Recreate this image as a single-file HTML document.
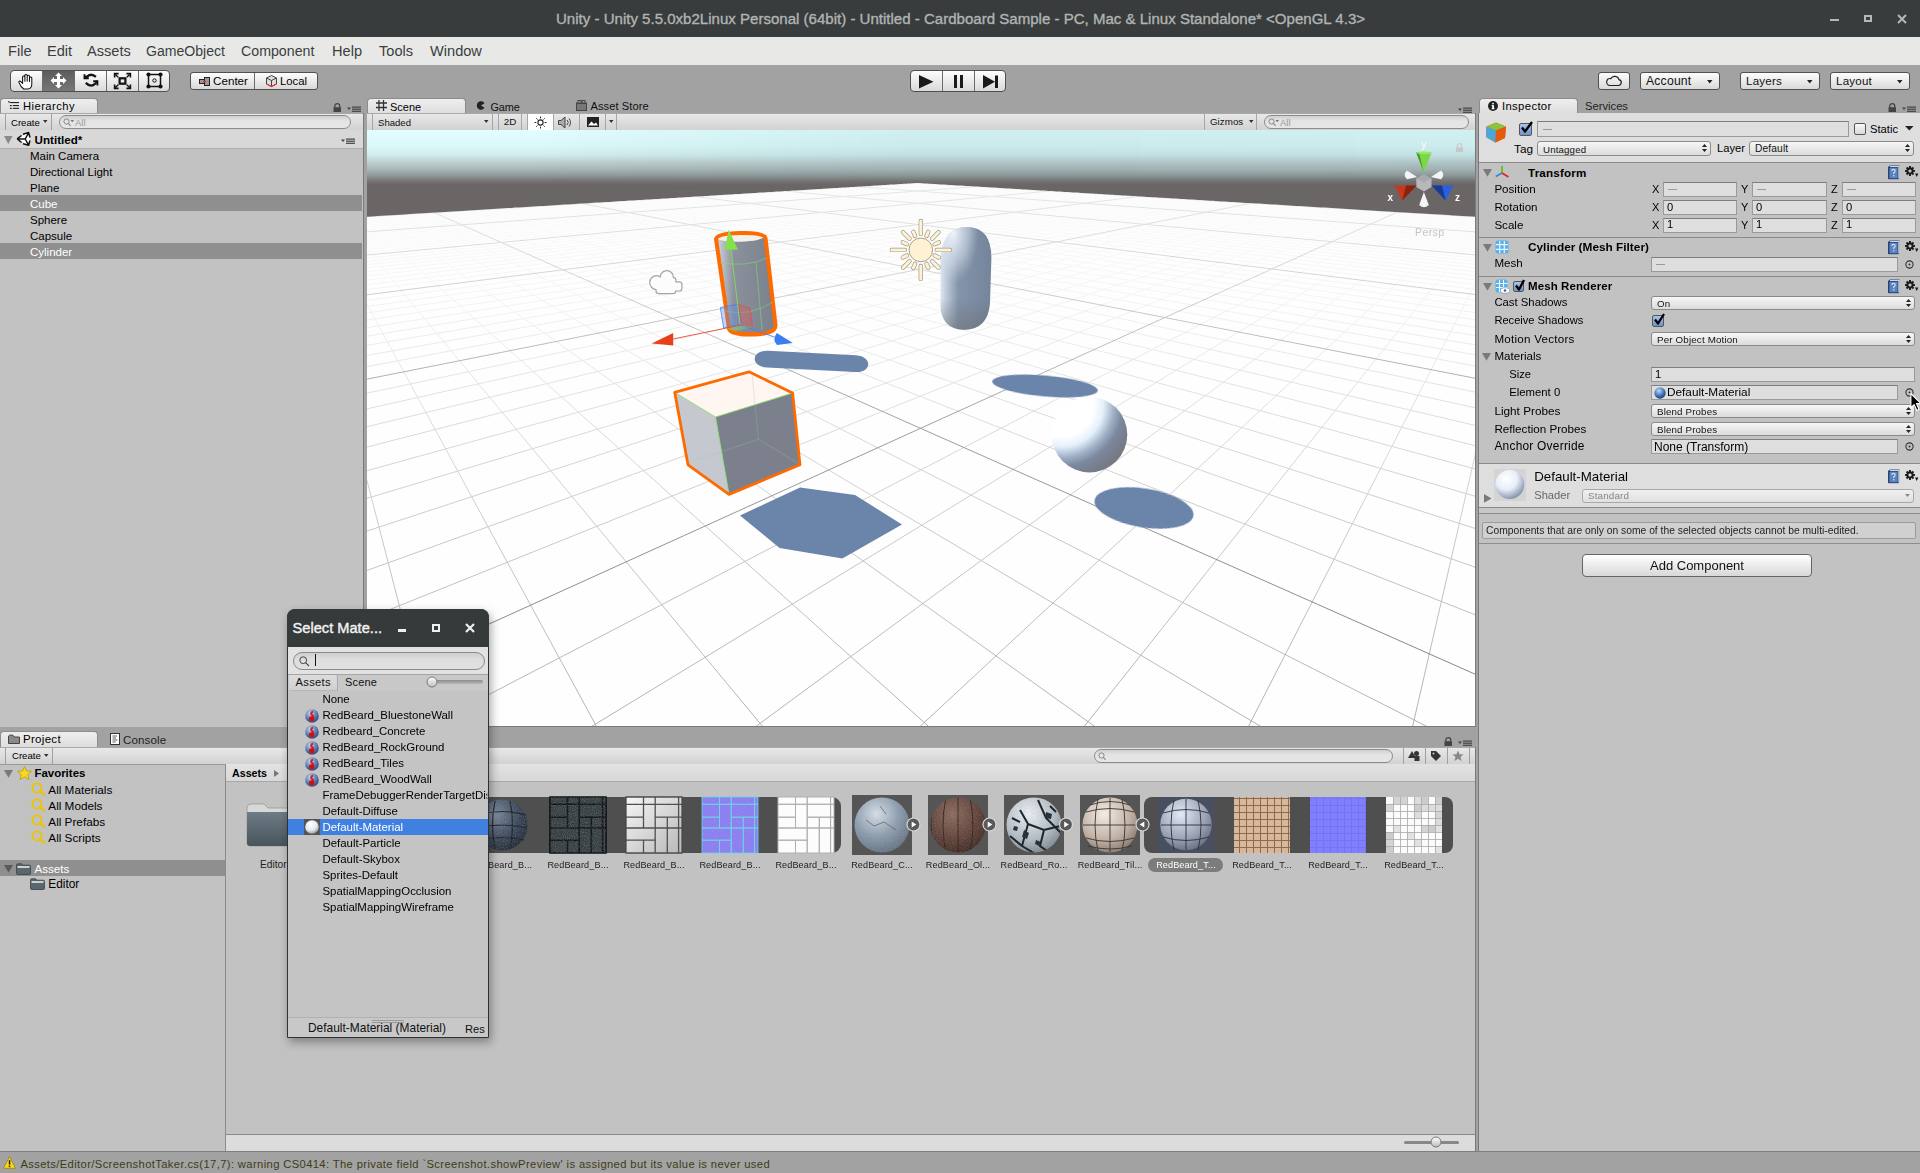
<!DOCTYPE html>
<html><head><meta charset="utf-8">
<style>
*{box-sizing:border-box;margin:0;padding:0}
html,body{width:1920px;height:1173px;overflow:hidden;background:#a2a2a2;font-family:"Liberation Sans",sans-serif;font-size:11px;color:#000}
.a{position:absolute}
.t{position:absolute;white-space:pre;line-height:1}
svg.a{overflow:visible}
.tab{position:absolute;height:16px;border:1px solid #8c8c8c;border-bottom:none;border-radius:4px 4px 0 0;background:linear-gradient(#eeeeee,#dedede)}
.ptb{position:absolute;height:18px;background:linear-gradient(#e8e8e8,#d2d2d2);border-top:1px solid #a8a8a8;border-bottom:1px solid #999}
.btn{position:absolute;border:1px solid #505050;border-radius:3px;background:linear-gradient(#fdfdfd,#d9d9d9)}
.dd{position:absolute;border:1px solid #8a8a8a;border-radius:3px;background:linear-gradient(#f6f6f6,#dcdcdc);height:14px}
.fld{position:absolute;border:1px solid #9a9a9a;border-top-color:#7e7e7e;background:#dedede;height:15px}
.sep{position:absolute;width:1px;background:#a4a4a4}
</style></head><body>
<div class="a" style="left:0px;top:0px;width:1920px;height:37px;background:#383c3c;"></div>
<div class="a" style="left:0px;top:37px;width:1920px;height:28px;background:#e8e8e7;"></div>
<div class="a" style="left:0px;top:65px;width:1920px;height:33px;background:#a2a2a2;"></div>
<div class="t" style="left:556px;top:11.26px;font-size:15.05px;color:#b0b4b4;-webkit-text-stroke:0.35px #b0b4b4;">Unity - Unity 5.5.0xb2Linux Personal (64bit) - Untitled - Cardboard Sample - PC, Mac &amp; Linux Standalone* &lt;OpenGL 4.3&gt;</div>
<div class="a" style="left:1830px;top:19px;width:9px;height:2px;background:#b4b8b8;"></div>
<div class="a" style="left:1864px;top:15px;width:8px;height:7px;border:2px solid #b4b8b8;"></div>
<svg class="a" style="left:1897px;top:14px;" width="10" height="10" viewBox="0 0 10 10"><path d="M1 1L9 9M9 1L1 9" stroke="#b4b8b8" stroke-width="2"/></svg>
<div class="t" style="left:8px;top:43.64px;font-size:14.6px;color:#3a3e3e;">File</div>
<div class="t" style="left:47px;top:43.64px;font-size:14.6px;color:#3a3e3e;">Edit</div>
<div class="t" style="left:87px;top:43.64px;font-size:14.6px;color:#3a3e3e;">Assets</div>
<div class="t" style="left:146px;top:44.09px;font-size:14.07px;color:#3a3e3e;">GameObject</div>
<div class="t" style="left:241px;top:43.98px;font-size:14.2px;color:#3a3e3e;">Component</div>
<div class="t" style="left:332px;top:43.64px;font-size:14.6px;color:#3a3e3e;">Help</div>
<div class="t" style="left:379px;top:43.64px;font-size:14.6px;color:#3a3e3e;">Tools</div>
<div class="t" style="left:430px;top:43.64px;font-size:14.6px;color:#3a3e3e;">Window</div>
<div class="btn" style="left:10px;top:70px;width:160px;height:22px;border-radius:4px"></div>
<div class="a" style="left:42px;top:71px;width:33px;height:20px;background:linear-gradient(#5c5c5c,#777);"></div>
<div class="a" style="left:42px;top:71px;width:1px;height:20px;background:#6b6b6b;"></div>
<div class="a" style="left:74px;top:71px;width:1px;height:20px;background:#6b6b6b;"></div>
<div class="a" style="left:106px;top:71px;width:1px;height:20px;background:#6b6b6b;"></div>
<div class="a" style="left:138px;top:71px;width:1px;height:20px;background:#6b6b6b;"></div>
<svg class="a" style="left:18px;top:73px;" width="16" height="17" viewBox="0 0 16 17"><path d="M5.8 16C3.8 14.6 1.8 11.6 1 9.6C0.5 8.3 1.8 7.6 2.8 8.6L4.6 10.4V4C4.6 2.6 6.9 2.6 6.9 4V8.2V2.6C6.9 1 9.2 1 9.2 2.6V8.2V3.2C9.2 1.8 11.5 1.8 11.5 3.2V8.4V5C11.5 3.7 13.8 3.7 13.8 5V10.8C13.8 13.8 12.3 16 9.8 16Z" fill="#fff" stroke="#111" stroke-width="1.05" stroke-linejoin="round"/></svg>
<svg class="a" style="left:50px;top:72px;" width="17" height="17" viewBox="0 0 17 17"><path d="M8.5 0.5L12 4H10V7H13V5L16.5 8.5L13 12V10H10V13H12L8.5 16.5L5 13H7V10H4V12L0.5 8.5L4 5V7H7V4H5Z" fill="#fff"/></svg>
<svg class="a" style="left:83px;top:73px;" width="16" height="16" viewBox="0 0 16 16"><path d="M3.4 4.2Q7.9 -0.6 12.9 3.9" fill="none" stroke="#111" stroke-width="2.3"/><path d="M1.5 1.2V5.3H5.8" fill="none" stroke="#111" stroke-width="1.9"/><path d="M1.5 5.3L3.8 3" stroke="#111" stroke-width="2"/><path d="M2.8 9.9Q7.9 15 12.4 10.5" fill="none" stroke="#111" stroke-width="2.3"/><path d="M10.2 8.3H14.4V12.6" fill="none" stroke="#111" stroke-width="1.9"/><path d="M14.4 8.3L12.2 10.6" stroke="#111" stroke-width="2"/></svg>
<svg class="a" style="left:114px;top:73px;" width="17" height="16" viewBox="0 0 17 16"><rect x="5.6" y="5.3" width="5.8" height="5.4" fill="none" stroke="#111" stroke-width="2.2"/><path d="M1.2 1.2L4.2 4.2M15.8 1.2L12.8 4.2M1.2 14.8L4.2 11.8M15.8 14.8L12.8 11.8" stroke="#111" stroke-width="1.4"/><path d="M0.6 4.6V0.6H4.6M12.4 0.6H16.4V4.6M0.6 11.4V15.4H4.6M16.4 11.4V15.4H12.4" fill="none" stroke="#111" stroke-width="1.6"/></svg>
<svg class="a" style="left:146px;top:72px;" width="17" height="17" viewBox="0 0 17 17"><path d="M2.5 2.5H14.5V14.5H2.5Z" fill="none" stroke="#111" stroke-width="1.5"/><circle cx="2.5" cy="2.5" r="2.1" fill="#111"/><circle cx="14.5" cy="2.5" r="2.1" fill="#111"/><circle cx="2.5" cy="14.5" r="2.1" fill="#111"/><circle cx="14.5" cy="14.5" r="2.1" fill="#111"/><circle cx="8.5" cy="8.5" r="1.7" fill="none" stroke="#111" stroke-width="1"/></svg>
<div class="btn" style="left:190px;top:72px;width:128px;height:18px"></div>
<div class="a" style="left:254px;top:73px;width:1px;height:16px;background:#6b6b6b;"></div>
<svg class="a" style="left:199px;top:77px;" width="11" height="9" viewBox="0 0 11 9"><rect x="0.5" y="2.5" width="5" height="4" fill="#999" stroke="#222" stroke-width="1"/><rect x="5.5" y="0.5" width="5" height="8" fill="#999" stroke="#222" stroke-width="1"/><path d="M4 4.5h3" stroke="#e33" stroke-width="1.5"/></svg>
<div class="t" style="left:213px;top:75.03px;font-size:11.66px;color:#000;">Center</div>
<svg class="a" style="left:266px;top:75px;" width="11" height="12" viewBox="0 0 11 12"><path d="M5.5 0.5L10.5 3V9L5.5 11.5L0.5 9V3Z" fill="#ddd" stroke="#444" stroke-width="1"/><path d="M0.5 3L5.5 5.5L10.5 3M5.5 5.5V11.5" fill="none" stroke="#444" stroke-width="1"/><path d="M0.5 9L5.5 11.5L10.5 9" fill="none" stroke="#e33" stroke-width="1.2"/></svg>
<div class="t" style="left:280px;top:75.84px;font-size:11.29px;color:#000;">Local</div>
<div class="btn" style="left:910px;top:70px;width:96px;height:22px;border-radius:4px"></div>
<div class="a" style="left:942px;top:71px;width:1px;height:20px;background:#6b6b6b;"></div>
<div class="a" style="left:974px;top:71px;width:1px;height:20px;background:#6b6b6b;"></div>
<svg class="a" style="left:919px;top:75px;" width="15" height="14" viewBox="0 0 15 14"><path d="M0 0L14.5 6.8L0 13.5Z" fill="#1a1a1a"/></svg>
<div class="a" style="left:954px;top:75px;width:3px;height:13px;background:#1a1a1a;"></div>
<div class="a" style="left:960px;top:75px;width:3px;height:13px;background:#1a1a1a;"></div>
<svg class="a" style="left:983px;top:75px;" width="16" height="14" viewBox="0 0 16 14"><path d="M0 0L12 6.8L0 13.5Z" fill="#1a1a1a"/><rect x="12" y="0.5" width="3" height="12.5" fill="#1a1a1a"/></svg>
<div class="btn" style="left:1598px;top:72px;width:32px;height:18px"></div>
<svg class="a" style="left:1606px;top:75px;" width="16" height="11" viewBox="0 0 16 11"><path d="M3.5 10.5H12.5A3 3 0 0 0 13 4.6A4.5 4.5 0 0 0 4.8 3.6A3.5 3.5 0 0 0 3.5 10.5Z" fill="none" stroke="#222" stroke-width="1.2"/></svg>
<div class="btn" style="left:1640px;top:72px;width:80px;height:18px"></div>
<div class="t" style="left:1646px;top:74.97px;font-size:12.2px;color:#111;letter-spacing:0.2px;">Account</div>
<svg class="a" style="left:1707px;top:80px;" width="6" height="4" viewBox="0 0 6 4"><path d="M0 0H5.5L2.75 3.5Z" fill="#222"/></svg>
<div class="btn" style="left:1740px;top:72px;width:80px;height:18px"></div>
<div class="t" style="left:1746px;top:75.48px;font-size:11.6px;color:#111;letter-spacing:0.2px;">Layers</div>
<svg class="a" style="left:1807px;top:80px;" width="6" height="4" viewBox="0 0 6 4"><path d="M0 0H5.5L2.75 3.5Z" fill="#222"/></svg>
<div class="btn" style="left:1830px;top:72px;width:80px;height:18px"></div>
<div class="t" style="left:1836px;top:75.48px;font-size:11.6px;color:#111;letter-spacing:0.2px;">Layout</div>
<svg class="a" style="left:1897px;top:80px;" width="6" height="4" viewBox="0 0 6 4"><path d="M0 0H5.5L2.75 3.5Z" fill="#222"/></svg>
<div class="a" style="left:0px;top:113px;width:363px;height:614px;background:#c2c2c2;"></div>
<div class="a" style="left:363px;top:113px;width:1px;height:614px;background:#7a7a7a;"></div>
<div class="tab" style="left:0px;top:98px;width:98px"></div>
<svg class="a" style="left:8px;top:101px;" width="11" height="9" viewBox="0 0 11 9"><rect x="0.1" y="0.2" width="1.5" height="1.3" fill="#222"/><rect x="1.9" y="1" width="9.1" height="1.1" fill="#222"/><rect x="1.9" y="4" width="1.8" height="1.2" fill="#222"/><rect x="4.8" y="4" width="6.2" height="1.1" fill="#222"/><rect x="1.9" y="6.8" width="1.8" height="1.2" fill="#222"/><rect x="4.8" y="6.8" width="6.2" height="1.1" fill="#222"/></svg>
<div class="t" style="left:23px;top:101.32px;font-size:11.2px;color:#000;letter-spacing:0.45px;">Hierarchy</div>
<svg class="a" style="left:333px;top:103px;" width="9" height="9" viewBox="0 0 9 9"><path d="M1.8 4.5V3A2.45 2.45 0 0 1 6.7 3V4.5" fill="none" stroke="#444" stroke-width="1.3"/><rect x="0.5" y="4.2" width="7.5" height="4.8" fill="#444"/></svg>
<svg class="a" style="left:347px;top:106px;" width="14" height="6" viewBox="0 0 14 6"><path d="M0 1.5H4L2 4Z" fill="#444"/><rect x="5" y="0.5" width="9" height="1.2" fill="#444"/><rect x="5" y="2.6" width="9" height="1.2" fill="#444"/><rect x="5" y="4.7" width="9" height="1.2" fill="#444"/></svg>
<div class="ptb" style="left:0;top:113px;width:363px"></div>
<div class="a" style="left:5px;top:114px;width:1px;height:16px;background:#a0a0a0;"></div>
<div class="a" style="left:51px;top:114px;width:1px;height:16px;background:#a0a0a0;"></div>
<div class="t" style="left:11px;top:117.87px;font-size:9.6px;color:#000;">Create</div>
<svg class="a" style="left:43px;top:120px;" width="5" height="3" viewBox="0 0 5 3"><path d="M0 0H4.5L2.25 3Z" fill="#333"/></svg>
<div class="a" style="left:59px;top:115px;width:292px;height:14px;border:1px solid #8c8c8c;border-radius:7px;background:linear-gradient(#d0d0d0,#e4e4e4 40%,#e6e6e6)"></div>
<svg class="a" style="left:63px;top:118px;" width="12" height="9" viewBox="0 0 12 9"><circle cx="3.5" cy="3.5" r="2.6" fill="none" stroke="#888" stroke-width="1"/><path d="M5.3 5.4L7.6 7.8" stroke="#888" stroke-width="1.1"/><path d="M7.5 2H11L9.25 4.2Z" fill="#777"/></svg>
<div class="t" style="left:75px;top:117.96px;font-size:9.5px;color:#9a9a9a;">All</div>
<div class="a" style="left:0px;top:130px;width:363px;height:19px;background:#d8d8d8;border-bottom:1px solid #aeaeae;"></div>
<svg class="a" style="left:4px;top:136px;" width="9" height="8" viewBox="0 0 9 8"><path d="M0 0H8.6L4.3 8Z" fill="#8a8a8a"/></svg>
<svg class="a" style="left:14px;top:130px;" width="18" height="18" viewBox="0 0 18 18"><path d="M3.1 8.8L14.6 2.5L16 7.5V10.5L14.6 15.3Z" fill="#fff"/><path d="M3.1 8.8L7.5 5.5M9 4.2L14.6 2.5L16 7.5M16 10.5L14.6 15.3L9 13.8M7.5 12.5L3.1 8.8M11.2 9H4.5M11.2 9L14.2 3.5M11.2 9L14.2 14.5" fill="none" stroke="#111" stroke-width="1.5" stroke-linejoin="round"/></svg>
<div class="t" style="left:34.6px;top:133.88px;font-size:11.6px;color:#000;font-weight:bold;">Untitled*</div>
<svg class="a" style="left:341px;top:138px;" width="14" height="6" viewBox="0 0 14 6"><path d="M0 1.5H4L2 4Z" fill="#444"/><rect x="5" y="0.5" width="9" height="1.2" fill="#444"/><rect x="5" y="2.6" width="9" height="1.2" fill="#444"/><rect x="5" y="4.7" width="9" height="1.2" fill="#444"/></svg>
<div class="t" style="left:30px;top:151.02px;font-size:11.5px;color:#000;">Main Camera</div>
<div class="t" style="left:30px;top:167.02px;font-size:11.5px;color:#000;">Directional Light</div>
<div class="t" style="left:30px;top:183.02px;font-size:11.5px;color:#000;">Plane</div>
<div class="a" style="left:0px;top:195px;width:362px;height:16px;background:#8f8f8f;"></div>
<div class="t" style="left:30px;top:199.02px;font-size:11.5px;color:#fff;">Cube</div>
<div class="t" style="left:30px;top:215.02px;font-size:11.5px;color:#000;">Sphere</div>
<div class="t" style="left:30px;top:231.02px;font-size:11.5px;color:#000;">Capsule</div>
<div class="a" style="left:0px;top:243px;width:362px;height:16px;background:#8f8f8f;"></div>
<div class="t" style="left:30px;top:247.02px;font-size:11.5px;color:#fff;">Cylinder</div>
<div class="a" style="left:1475px;top:113px;width:1px;height:614px;background:#7a7a7a;"></div>
<div class="tab" style="left:367px;top:98px;width:99px"></div>
<svg class="a" style="left:376px;top:100px;" width="11" height="11" viewBox="0 0 11 11"><path d="M3 0V11M7.5 0V11M0 3H11M0 7.5H11" stroke="#333" stroke-width="1.3"/></svg>
<div class="t" style="left:390px;top:101.55px;font-size:10.93px;color:#000;letter-spacing:0.05px;">Scene</div>
<svg class="a" style="left:476px;top:101px;" width="9" height="9" viewBox="0 0 9 9"><path d="M8.5 2.2A4.2 4.2 0 1 0 8.5 6.8L5 4.5Z" fill="#222"/></svg>
<div class="t" style="left:490.4px;top:101.63px;font-size:10.83px;color:#111;">Game</div>
<svg class="a" style="left:576px;top:100px;" width="11" height="11" viewBox="0 0 11 11"><rect x="0.5" y="3" width="10" height="7.5" fill="#777" stroke="#444"/><rect x="2" y="0.5" width="3" height="3" fill="none" stroke="#444"/><rect x="6" y="0.5" width="3" height="3" fill="none" stroke="#444"/></svg>
<div class="t" style="left:590.4px;top:101.40px;font-size:11.1px;color:#111;letter-spacing:0.1px;">Asset Store</div>
<svg class="a" style="left:1458px;top:107px;" width="14" height="6" viewBox="0 0 14 6"><path d="M0 1.5H4L2 4Z" fill="#444"/><rect x="5" y="0.5" width="9" height="1.2" fill="#444"/><rect x="5" y="2.6" width="9" height="1.2" fill="#444"/><rect x="5" y="4.7" width="9" height="1.2" fill="#444"/></svg>
<div class="ptb" style="left:367px;top:113px;width:1108px"></div>
<div class="a" style="left:372px;top:114px;width:1px;height:16px;background:#a6a6a6;"></div>
<div class="a" style="left:492px;top:114px;width:1px;height:16px;background:#a6a6a6;"></div>
<div class="a" style="left:498px;top:114px;width:1px;height:16px;background:#a6a6a6;"></div>
<div class="a" style="left:521px;top:114px;width:1px;height:16px;background:#a6a6a6;"></div>
<div class="a" style="left:527px;top:114px;width:1px;height:16px;background:#a6a6a6;"></div>
<div class="a" style="left:553px;top:114px;width:1px;height:16px;background:#a6a6a6;"></div>
<div class="a" style="left:579px;top:114px;width:1px;height:16px;background:#a6a6a6;"></div>
<div class="a" style="left:605px;top:114px;width:1px;height:16px;background:#a6a6a6;"></div>
<div class="a" style="left:616px;top:114px;width:1px;height:16px;background:#a6a6a6;"></div>
<div class="a" style="left:1204px;top:114px;width:1px;height:16px;background:#a6a6a6;"></div>
<div class="a" style="left:1256px;top:114px;width:1px;height:16px;background:#a6a6a6;"></div>
<div class="t" style="left:378px;top:117.60px;font-size:9.57px;color:#111;">Shaded</div>
<svg class="a" style="left:484px;top:120px;" width="5" height="3" viewBox="0 0 5 3"><path d="M0 0H4.5L2.25 3Z" fill="#333"/></svg>
<div class="t" style="left:503.7px;top:117.40px;font-size:9.8px;color:#111;">2D</div>
<div class="a" style="left:528px;top:114px;width:25px;height:16px;background:#ffffff;"></div>
<svg class="a" style="left:533px;top:116px;" width="15" height="13" viewBox="0 0 15 13"><circle cx="7.5" cy="6.5" r="2.6" fill="none" stroke="#222" stroke-width="1.1"/><path d="M7.5 0.5V2.3M7.5 10.7V12.5M1.5 6.5H3.3M11.7 6.5H13.5M3.3 2.3L4.5 3.5M10.5 9.5L11.7 10.7M11.7 2.3L10.5 3.5M4.5 9.5L3.3 10.7" stroke="#222" stroke-width="1"/></svg>
<svg class="a" style="left:558px;top:116px;" width="14" height="13" viewBox="0 0 14 13"><path d="M0.5 4.5H3L7 1V12L3 8.5H0.5Z" fill="#aaa" stroke="#444" stroke-width="1"/><path d="M9 4A3.5 3.5 0 0 1 9 9M11 2.5A6 6 0 0 1 11 10.5" fill="none" stroke="#444" stroke-width="1"/></svg>
<svg class="a" style="left:587px;top:117px;" width="12" height="10" viewBox="0 0 12 10"><rect x="0" y="0" width="12" height="10" fill="#222"/><path d="M1 8.5L4.5 4.5L7 7L9 5.5L11 8.5Z" fill="#fff"/></svg>
<svg class="a" style="left:609px;top:120px;" width="5" height="3" viewBox="0 0 5 3"><path d="M0 0H4.5L2.25 3Z" fill="#333"/></svg>
<div class="t" style="left:1210px;top:117.46px;font-size:9.74px;color:#111;letter-spacing:0.05px;">Gizmos</div>
<svg class="a" style="left:1249px;top:120px;" width="5" height="3" viewBox="0 0 5 3"><path d="M0 0H4.5L2.25 3Z" fill="#333"/></svg>
<div class="a" style="left:1264px;top:115px;width:205px;height:14px;border:1px solid #8c8c8c;border-radius:7px;background:linear-gradient(#d0d0d0,#e4e4e4 40%,#e6e6e6)"></div>
<svg class="a" style="left:1268px;top:118px;" width="12" height="9" viewBox="0 0 12 9"><circle cx="3.5" cy="3.5" r="2.6" fill="none" stroke="#888" stroke-width="1"/><path d="M5.3 5.4L7.6 7.8" stroke="#888" stroke-width="1.1"/><path d="M7.5 2H11L9.25 4.2Z" fill="#777"/></svg>
<div class="t" style="left:1280px;top:117.96px;font-size:9.5px;color:#9a9a9a;">All</div>
<svg class="a" style="left:367px;top:130px;overflow:hidden" width="1108" height="597" viewBox="0 0 1108 597">
<defs>
<linearGradient id="sky" x1="0" y1="0" x2="0" y2="597" gradientUnits="userSpaceOnUse">
<stop offset="0" stop-color="#e2fdfd"/>
<stop offset="0.0268" stop-color="#dcf8f8"/>
<stop offset="0.0419" stop-color="#d0ecec"/>
<stop offset="0.0553" stop-color="#bccccc"/>
<stop offset="0.0670" stop-color="#a6b4b4"/>
<stop offset="0.0771" stop-color="#8e9696"/>
<stop offset="0.0854" stop-color="#767474"/>
<stop offset="0.0921" stop-color="#6b6666"/>
<stop offset="1" stop-color="#6b6666"/>
</linearGradient>
<linearGradient id="fadeMinor" x1="0" y1="0" x2="0" y2="597" gradientUnits="userSpaceOnUse">
<stop offset="0.0921" stop-color="#050505"/>
<stop offset="0.1508" stop-color="#0d0d0d"/>
<stop offset="0.2848" stop-color="#222"/>
<stop offset="0.5025" stop-color="#777"/>
<stop offset="0.7538" stop-color="#c8c8c8"/>
<stop offset="1" stop-color="#fff"/>
</linearGradient>
<mask id="mMinor" maskUnits="userSpaceOnUse" x="0" y="0" width="1108" height="597"><rect width="1108" height="597" fill="url(#fadeMinor)"/></mask>
<linearGradient id="fadeMajor" x1="0" y1="0" x2="0" y2="597" gradientUnits="userSpaceOnUse">
<stop offset="0.0921" stop-color="#2a2a2a"/>
<stop offset="0.2513" stop-color="#555"/>
<stop offset="0.5025" stop-color="#c8c8c8"/>
<stop offset="1" stop-color="#fff"/>
</linearGradient>
<mask id="mMajor" maskUnits="userSpaceOnUse" x="0" y="0" width="1108" height="597"><rect width="1108" height="597" fill="url(#fadeMajor)"/></mask>
<clipPath id="cPlane"><path d="M550.4 53.0L549.1 53.1L547.7 53.1L546.3 53.2L544.9 53.3L543.5 53.4L542.1 53.5L540.7 53.6L539.3 53.7L537.9 53.8L536.4 53.8L535.0 53.9L533.6 54.0L532.1 54.1L530.6 54.2L529.2 54.3L527.7 54.4L526.2 54.5L524.8 54.6L523.3 54.6L521.8 54.7L520.3 54.8L518.8 54.9L517.3 55.0L515.7 55.1L514.2 55.2L512.7 55.3L511.1 55.4L509.6 55.5L508.0 55.6L506.5 55.7L504.9 55.8L503.3 55.9L501.7 56.0L500.1 56.1L498.5 56.2L496.9 56.3L495.3 56.4L493.7 56.5L492.0 56.6L490.4 56.7L488.7 56.8L487.1 56.9L485.4 57.0L483.7 57.1L482.1 57.2L480.4 57.3L478.7 57.4L477.0 57.5L475.3 57.6L473.5 57.7L471.8 57.8L470.1 57.9L468.3 58.0L466.6 58.1L464.8 58.2L463.0 58.3L461.3 58.4L459.5 58.6L457.7 58.7L455.9 58.8L454.0 58.9L452.2 59.0L450.4 59.1L448.5 59.2L446.7 59.3L444.8 59.5L442.9 59.6L441.1 59.7L439.2 59.8L437.3 59.9L435.3 60.0L433.4 60.2L431.5 60.3L429.5 60.4L427.6 60.5L425.6 60.6L423.7 60.8L421.7 60.9L419.7 61.0L417.7 61.1L415.7 61.2L413.6 61.4L411.6 61.5L409.6 61.6L407.5 61.7L405.4 61.9L403.3 62.0L401.3 62.1L399.1 62.3L397.0 62.4L394.9 62.5L392.8 62.6L390.6 62.8L388.5 62.9L386.3 63.0L384.1 63.2L381.9 63.3L379.7 63.4L377.5 63.6L375.2 63.7L373.0 63.9L370.7 64.0L368.5 64.1L366.2 64.3L363.9 64.4L361.6 64.6L359.3 64.7L356.9 64.8L354.6 65.0L352.2 65.1L349.8 65.3L347.4 65.4L345.0 65.6L342.6 65.7L340.2 65.9L337.7 66.0L335.3 66.2L332.8 66.3L330.3 66.5L327.8 66.6L325.3 66.8L322.8 66.9L320.2 67.1L317.6 67.3L315.1 67.4L312.5 67.6L309.9 67.7L307.2 67.9L304.6 68.1L301.9 68.2L299.3 68.4L296.6 68.5L293.9 68.7L291.1 68.9L288.4 69.0L285.6 69.2L282.9 69.4L280.1 69.6L277.3 69.7L274.4 69.9L271.6 70.1L268.7 70.3L265.8 70.4L262.9 70.6L260.0 70.8L257.1 71.0L254.1 71.1L251.1 71.3L248.2 71.5L245.1 71.7L242.1 71.9L239.1 72.1L236.0 72.3L232.9 72.5L229.8 72.6L226.6 72.8L223.5 73.0L220.3 73.2L217.1 73.4L213.9 73.6L210.7 73.8L207.4 74.0L204.1 74.2L200.8 74.4L197.5 74.6L194.1 74.8L190.8 75.0L187.4 75.2L183.9 75.5L180.5 75.7L177.0 75.9L173.5 76.1L170.0 76.3L166.5 76.5L162.9 76.7L159.3 77.0L155.7 77.2L152.1 77.4L148.4 77.6L144.7 77.9L141.0 78.1L137.2 78.3L133.5 78.5L129.7 78.8L125.8 79.0L122.0 79.3L118.1 79.5L114.2 79.7L110.2 80.0L106.3 80.2L102.3 80.5L98.2 80.7L94.2 81.0L90.1 81.2L85.9 81.5L81.8 81.7L77.6 82.0L73.4 82.2L69.1 82.5L64.8 82.8L60.5 83.0L56.2 83.3L51.8 83.6L47.4 83.8L42.9 84.1L38.4 84.4L33.9 84.7L29.3 84.9L24.7 85.2L20.1 85.5L15.4 85.8L10.7 86.1L6.0 86.4L1.2 86.7L-3.7 87.0L-8.5 87.3L-13.4 87.6L-18.4 87.9L-23.4 88.2L-28.4 88.5L-33.5 88.8L-38.6 89.1L-43.8 89.4L-49.0 89.7L-54.2 90.1L-59.5 90.4L-64.8 90.7L-70.2 91.0L-75.6 91.4L-81.1 91.7L-86.7 92.0L-92.2 92.4L-97.9 92.7L-103.5 93.1L-109.3 93.4L-115.0 93.8L-120.9 94.1L-126.7 94.5L-132.7 94.9L-138.7 95.2L-144.7 95.6L-150.8 96.0L-157.0 96.4L-163.2 96.7L-169.4 97.1L-175.8 97.5L-182.2 97.9L-188.6 98.3L-195.1 98.7L-201.7 99.1L-208.3 99.5L-215.0 99.9L-221.8 100.3L-228.6 100.7L-235.5 101.2L-242.5 101.6L-249.5 102.0L-256.6 102.5L-263.8 102.9L-271.1 103.4L-278.4 103.8L-285.8 104.3L-293.3 104.7L-300.8 105.2L-308.4 105.6L-316.1 106.1L-323.9 106.6L-331.8 107.1L-339.7 107.6L-347.8 108.1L-355.9 108.6L-364.1 109.1L-372.4 109.6L-380.8 110.1L-389.2 110.6L-397.8 111.1L-406.5 111.7L-415.2 112.2L-424.1 112.7L-433.0 113.3L-442.1 113.8L-451.2 114.4L-460.5 115.0L-469.9 115.5L-479.3 116.1L-488.9 116.7L-498.6 117.3L-508.4 117.9L-518.4 118.5L-528.4 119.1L-538.6 119.8L-548.8 120.4L-559.2 121.0L-569.8 121.7L-580.4 122.3L-591.2 123.0L-602.1 123.7L-613.2 124.3L-624.4 125.0L-635.7 125.7L-647.2 126.4L-658.8 127.1L-670.6 127.9L-682.5 128.6L-694.6 129.3L-706.9 130.1L-719.3 130.8L-731.8 131.6L-744.6 132.4L-757.5 133.2L-770.5 134.0L-783.8 134.8L-797.2 135.6L-810.9 136.4L-824.7 137.3L-838.7 138.2L-852.9 139.0L-867.3 139.9L-881.9 140.8L-896.7 141.7L-911.7 142.6L-927.0 143.6L-942.5 144.5L-958.2 145.5L-974.1 146.5L-990.3 147.5L-1006.7 148.5L-1023.4 149.5L-1040.3 150.5L-1057.5 151.6L-1075.0 152.6L-1092.7 153.7L-1110.7 154.8L-1129.0 156.0L-1147.6 157.1L-1166.5 158.3L-1185.7 159.4L-1205.3 160.6L-1225.1 161.9L-1245.3 163.1L-1265.8 164.3L-1286.7 165.6L-1307.9 166.9L-1329.5 168.3L-1351.5 169.6L-1373.9 171.0L-1396.7 172.4L-1419.9 173.8L-1443.5 175.2L-1467.5 176.7L-1492.0 178.2L-1516.9 179.7L-1542.3 181.3L-1568.2 182.9L-1594.6 184.5L-1621.5 186.2L-1649.0 187.8L-1676.9 189.6L-1705.5 191.3L-1734.6 193.1L-1764.3 194.9L-1794.6 196.8L-1825.5 198.7L-1857.1 200.6L-1889.4 202.6L-1922.3 204.6L-1956.0 206.7L-1990.4 208.8L-2025.6 210.9L-2061.5 213.1L-2098.3 215.4L-2135.9 217.7L-2174.4 220.1L-2213.9 222.5L-2254.2 225.0L-2295.5 227.5L-2337.8 230.1L-2367.0 232.7L-2367.0 235.5L-2367.0 238.3L-2367.0 241.1L-2367.0 244.1L-2367.0 247.1L-2367.0 250.2L-2367.0 253.4L-2367.0 256.6L-2367.0 260.0L-2367.0 263.4L-2367.0 267.0L-2367.0 270.6L-2367.0 274.4L-2367.0 278.3L-2367.0 282.3L-2367.0 286.4L-2367.0 290.6L-2367.0 295.0L-2367.0 299.5L-2367.0 304.2L-2367.0 309.0L-2367.0 309.0L-2367.0 313.9L-2367.0 319.0L-2367.0 324.3L-2367.0 329.7L-2367.0 335.4L-2367.0 341.2L-2367.0 347.3L-2367.0 353.6L-2367.0 360.2L-2367.0 367.0L-2367.0 374.1L-2367.0 381.4L-2367.0 389.1L-2367.0 397.1L-2367.0 405.5L-2367.0 414.2L-2367.0 423.3L-2367.0 432.9L-2367.0 442.9L-2367.0 453.4L-2367.0 464.4L-2367.0 476.0L-2367.0 488.2L-2367.0 501.1L-2367.0 514.7L-2367.0 529.0L-2367.0 544.3L-2367.0 560.4L-2367.0 577.6L-2367.0 595.9L-2367.0 615.4L-2367.0 636.2L-2367.0 658.6L-2367.0 682.6L-2367.0 708.5L-2367.0 736.5L-2367.0 766.8L-2367.0 799.8L-2367.0 835.8L-2367.0 875.3L-2367.0 918.7L-2367.0 966.8L-2367.0 1020.3L-2367.0 1080.1L-2367.0 1147.5L-2367.0 1224.0L-2367.0 1311.6L-2367.0 1412.9L-2367.0 1531.3L-2367.0 1671.6L-2367.0 1840.6L-2367.0 2047.9L-2367.0 2308.2L-2367.0 2645.1L-2367.0 2870.0L-2367.0 2870.0L-2367.0 2870.0L-2367.0 2870.0L2633.0 2870.0L2633.0 2870.0L2633.0 2870.0L2633.0 2870.0L2633.0 2685.0L2633.0 2335.1L2633.0 2066.2L2633.0 1853.2L2633.0 1680.3L2633.0 1537.1L2633.0 1416.5L2633.0 1313.7L2633.0 1224.9L2633.0 1147.4L2633.0 1079.3L2633.0 1018.9L2633.0 965.0L2633.0 916.6L2633.0 872.9L2633.0 833.2L2633.0 797.0L2633.0 763.9L2633.0 733.5L2633.0 705.4L2633.0 679.5L2633.0 655.4L2633.0 633.0L2633.0 612.1L2633.0 592.6L2633.0 574.3L2633.0 557.2L2633.0 541.0L2633.0 525.8L2633.0 511.5L2633.0 497.9L2633.0 485.1L2633.0 472.9L2633.0 461.3L2633.0 450.3L2633.0 439.8L2633.0 429.9L2633.0 420.3L2633.0 411.2L2633.0 402.5L2633.0 394.2L2633.0 386.2L2633.0 378.6L2633.0 371.3L2633.0 364.2L2633.0 357.4L2633.0 350.9L2633.0 344.6L2633.0 338.6L2633.0 332.8L2633.0 327.2L2633.0 321.7L2633.0 316.5L2633.0 311.4L2633.0 306.5L2633.0 301.8L2633.0 297.2L2633.0 292.7L2633.0 288.4L2633.0 288.4L2633.0 284.3L2633.0 280.3L2633.0 276.4L2633.0 272.6L2633.0 269.0L2633.0 265.4L2633.0 261.9L2633.0 258.6L2633.0 255.3L2633.0 252.1L2633.0 249.0L2633.0 245.9L2633.0 243.0L2633.0 240.1L2633.0 237.3L2633.0 234.6L2633.0 231.9L2633.0 229.3L2633.0 226.7L2633.0 224.2L2633.0 221.8L2633.0 219.4L2633.0 217.1L2633.0 214.9L2633.0 212.6L2633.0 210.5L2633.0 208.3L2633.0 206.3L2633.0 204.2L2633.0 202.2L2633.0 200.3L2633.0 198.4L2633.0 196.5L2633.0 194.7L2633.0 192.9L2633.0 191.1L2633.0 189.4L2633.0 187.7L2633.0 186.0L2633.0 184.4L2633.0 182.8L2633.0 181.2L2633.0 179.7L2619.1 178.2L2594.6 176.7L2570.5 175.3L2546.9 173.8L2523.6 172.4L2500.8 171.0L2478.4 169.7L2456.3 168.3L2434.7 167.0L2413.4 165.7L2392.4 164.5L2371.8 163.2L2351.6 162.0L2331.6 160.8L2312.0 159.6L2292.7 158.4L2273.8 157.3L2255.1 156.2L2236.7 155.0L2218.6 154.0L2200.8 152.9L2183.2 151.8L2165.9 150.8L2148.9 149.7L2132.2 148.7L2115.6 147.7L2099.4 146.7L2083.3 145.8L2067.5 144.8L2052.0 143.9L2036.6 142.9L2021.5 142.0L2006.6 141.1L1991.9 140.2L1977.4 139.4L1963.1 138.5L1949.0 137.6L1935.1 136.8L1921.3 136.0L1907.8 135.1L1894.5 134.3L1881.3 133.5L1868.3 132.7L1855.4 132.0L1842.8 131.2L1830.3 130.4L1817.9 129.7L1805.8 129.0L1793.7 128.2L1781.9 127.5L1770.1 126.8L1758.6 126.1L1747.1 125.4L1735.8 124.7L1724.7 124.1L1713.6 123.4L1702.8 122.7L1692.0 122.1L1681.4 121.4L1670.9 120.8L1660.5 120.2L1650.2 119.6L1640.1 118.9L1630.1 118.3L1620.2 117.7L1610.4 117.1L1600.7 116.6L1591.1 116.0L1581.7 115.4L1572.3 114.8L1563.1 114.3L1553.9 113.7L1544.9 113.2L1535.9 112.6L1527.1 112.1L1518.3 111.6L1509.7 111.0L1501.1 110.5L1492.6 110.0L1484.2 109.5L1475.9 109.0L1467.7 108.5L1459.6 108.0L1451.6 107.5L1443.6 107.0L1435.7 106.6L1428.0 106.1L1420.2 105.6L1412.6 105.2L1405.0 104.7L1397.6 104.3L1390.2 103.8L1382.8 103.4L1375.6 102.9L1368.4 102.5L1361.2 102.1L1354.2 101.6L1347.2 101.2L1340.3 100.8L1333.4 100.4L1326.7 100.0L1319.9 99.6L1313.3 99.2L1306.7 98.8L1300.2 98.4L1293.7 98.0L1287.3 97.6L1280.9 97.2L1274.6 96.8L1268.4 96.4L1262.2 96.1L1256.1 95.7L1250.0 95.3L1244.0 95.0L1238.1 94.6L1232.2 94.2L1226.3 93.9L1220.5 93.5L1214.8 93.2L1209.1 92.8L1203.4 92.5L1197.8 92.2L1192.3 91.8L1186.7 91.5L1181.3 91.2L1175.9 90.8L1170.5 90.5L1165.2 90.2L1159.9 89.9L1154.7 89.6L1149.5 89.2L1144.4 88.9L1139.3 88.6L1134.2 88.3L1129.2 88.0L1124.2 87.7L1119.3 87.4L1114.4 87.1L1109.5 86.8L1104.7 86.5L1099.9 86.2L1095.2 86.0L1090.5 85.7L1085.8 85.4L1081.2 85.1L1076.6 84.8L1072.0 84.6L1067.5 84.3L1063.0 84.0L1058.6 83.7L1054.2 83.5L1049.8 83.2L1045.4 82.9L1041.1 82.7L1036.8 82.4L1032.6 82.2L1028.4 81.9L1024.2 81.7L1020.0 81.4L1015.9 81.2L1011.8 80.9L1007.7 80.7L1003.7 80.4L999.7 80.2L995.7 79.9L991.8 79.7L987.9 79.5L984.0 79.2L980.1 79.0L976.3 78.8L972.5 78.5L968.7 78.3L964.9 78.1L961.2 77.8L957.5 77.6L953.8 77.4L950.2 77.2L946.6 77.0L943.0 76.7L939.4 76.5L935.9 76.3L932.3 76.1L928.8 75.9L925.4 75.7L921.9 75.5L918.5 75.3L915.1 75.1L911.7 74.8L908.4 74.6L905.0 74.4L901.7 74.2L898.4 74.0L895.1 73.8L891.9 73.6L888.7 73.5L885.5 73.3L882.3 73.1L879.1 72.9L876.0 72.7L872.8 72.5L869.7 72.3L866.7 72.1L863.6 71.9L860.6 71.8L857.5 71.6L854.5 71.4L851.5 71.2L848.6 71.0L845.6 70.8L842.7 70.7L839.8 70.5L836.9 70.3L834.0 70.1L831.2 70.0L828.3 69.8L825.5 69.6L822.7 69.5L819.9 69.3L817.1 69.1L814.4 69.0L811.7 68.8L808.9 68.6L806.2 68.5L803.5 68.3L800.9 68.1L798.2 68.0L795.6 67.8L793.0 67.7L790.4 67.5L787.8 67.3L785.2 67.2L782.6 67.0L780.1 66.9L777.5 66.7L775.0 66.6L772.5 66.4L770.0 66.3L767.6 66.1L765.1 66.0L762.7 65.8L760.2 65.7L757.8 65.5L755.4 65.4L753.0 65.2L750.6 65.1L748.3 65.0L745.9 64.8L743.6 64.7L741.3 64.5L738.9 64.4L736.6 64.3L734.4 64.1L732.1 64.0L729.8 63.8L727.6 63.7L725.3 63.6L723.1 63.4L720.9 63.3L718.7 63.2L716.5 63.0L714.4 62.9L712.2 62.8L710.0 62.6L707.9 62.5L705.8 62.4L703.7 62.3L701.5 62.1L699.5 62.0L697.4 61.9L695.3 61.7L693.2 61.6L691.2 61.5L689.1 61.4L687.1 61.3L685.1 61.1L683.1 61.0L681.1 60.9L679.1 60.8L677.1 60.6L675.2 60.5L673.2 60.4L671.2 60.3L669.3 60.2L667.4 60.1L665.5 59.9L663.6 59.8L661.7 59.7L659.8 59.6L657.9 59.5L656.0 59.4L654.2 59.3L652.3 59.1L650.5 59.0L648.6 58.9L646.8 58.8L645.0 58.7L643.2 58.6L641.4 58.5L639.6 58.4L637.8 58.3L636.1 58.2L634.3 58.1L632.5 57.9L630.8 57.8L629.1 57.7L627.3 57.6L625.6 57.5L623.9 57.4L622.2 57.3L620.5 57.2L618.8 57.1L617.1 57.0L615.5 56.9L613.8 56.8L612.2 56.7L610.5 56.6L608.9 56.5L607.2 56.4L605.6 56.3L604.0 56.2L602.4 56.1L600.8 56.0L599.2 55.9L597.6 55.8L596.0 55.7L594.5 55.6L592.9 55.5L591.3 55.5L589.8 55.4L588.2 55.3L586.7 55.2L585.2 55.1L583.6 55.0L582.1 54.9L580.6 54.8L579.1 54.7L577.6 54.6L576.1 54.5L574.7 54.4L573.2 54.4L571.7 54.3L570.2 54.2L568.8 54.1L567.3 54.0L565.9 53.9L564.5 53.8L563.0 53.7L561.6 53.7L560.2 53.6L558.8 53.5L557.4 53.4L556.0 53.3L554.6 53.2L553.2 53.1L551.8 53.1L550.4 53.0Z"/></clipPath>
<linearGradient id="cylg" x1="0" y1="0" x2="1" y2="0"><stop offset="0" stop-color="#d4d8e0"/><stop offset="0.3" stop-color="#8a909c"/><stop offset="1" stop-color="#7a808c"/></linearGradient>
<linearGradient id="capg" x1="0" y1="0" x2="1" y2="0"><stop offset="0" stop-color="#dfe8f2"/><stop offset="0.1" stop-color="#c2cedc"/><stop offset="0.35" stop-color="#8494aa"/><stop offset="1" stop-color="#74849a"/></linearGradient><radialGradient id="capTop" cx="0.25" cy="0.05" r="0.5"><stop offset="0" stop-color="#f4f8ff" stop-opacity="0.95"/><stop offset="0.6" stop-color="#dce6f2" stop-opacity="0.5"/><stop offset="1" stop-color="#c8d4e4" stop-opacity="0"/></radialGradient><linearGradient id="capBot" x1="0" y1="0" x2="0" y2="1"><stop offset="0.7" stop-color="#6a6e74" stop-opacity="0"/><stop offset="1" stop-color="#6a6e74" stop-opacity="0.55"/></linearGradient>
<radialGradient id="sphg" cx="0.12" cy="0.1" r="1.0" fx="0.15" fy="0.12"><stop offset="0" stop-color="#ffffff"/><stop offset="0.42" stop-color="#ffffff"/><stop offset="0.55" stop-color="#e4f0fc"/><stop offset="0.7" stop-color="#9eaec4"/><stop offset="0.82" stop-color="#7a889e"/><stop offset="1" stop-color="#767a84"/></radialGradient>
</defs>
<rect width="1108" height="597" fill="url(#sky)"/>
<linearGradient id="skyH" x1="0" y1="0" x2="1108" y2="0" gradientUnits="userSpaceOnUse"><stop offset="0.15" stop-color="#307080" stop-opacity="0"/><stop offset="0.5" stop-color="#307080" stop-opacity="0.1"/><stop offset="1" stop-color="#307080" stop-opacity="0.09"/></linearGradient>
<linearGradient id="skyV" x1="0" y1="0" x2="0" y2="60" gradientUnits="userSpaceOnUse"><stop offset="0" stop-color="#fff"/><stop offset="0.55" stop-color="#fff"/><stop offset="1" stop-color="#000"/></linearGradient>
<mask id="mSkyV" maskUnits="userSpaceOnUse" x="0" y="0" width="1108" height="60"><rect width="1108" height="60" fill="url(#skyV)"/></mask>
<rect width="1108" height="60" fill="url(#skyH)" mask="url(#mSkyV)"/>
<path d="M550.4 53.0L549.1 53.1L547.7 53.1L546.3 53.2L544.9 53.3L543.5 53.4L542.1 53.5L540.7 53.6L539.3 53.7L537.9 53.8L536.4 53.8L535.0 53.9L533.6 54.0L532.1 54.1L530.6 54.2L529.2 54.3L527.7 54.4L526.2 54.5L524.8 54.6L523.3 54.6L521.8 54.7L520.3 54.8L518.8 54.9L517.3 55.0L515.7 55.1L514.2 55.2L512.7 55.3L511.1 55.4L509.6 55.5L508.0 55.6L506.5 55.7L504.9 55.8L503.3 55.9L501.7 56.0L500.1 56.1L498.5 56.2L496.9 56.3L495.3 56.4L493.7 56.5L492.0 56.6L490.4 56.7L488.7 56.8L487.1 56.9L485.4 57.0L483.7 57.1L482.1 57.2L480.4 57.3L478.7 57.4L477.0 57.5L475.3 57.6L473.5 57.7L471.8 57.8L470.1 57.9L468.3 58.0L466.6 58.1L464.8 58.2L463.0 58.3L461.3 58.4L459.5 58.6L457.7 58.7L455.9 58.8L454.0 58.9L452.2 59.0L450.4 59.1L448.5 59.2L446.7 59.3L444.8 59.5L442.9 59.6L441.1 59.7L439.2 59.8L437.3 59.9L435.3 60.0L433.4 60.2L431.5 60.3L429.5 60.4L427.6 60.5L425.6 60.6L423.7 60.8L421.7 60.9L419.7 61.0L417.7 61.1L415.7 61.2L413.6 61.4L411.6 61.5L409.6 61.6L407.5 61.7L405.4 61.9L403.3 62.0L401.3 62.1L399.1 62.3L397.0 62.4L394.9 62.5L392.8 62.6L390.6 62.8L388.5 62.9L386.3 63.0L384.1 63.2L381.9 63.3L379.7 63.4L377.5 63.6L375.2 63.7L373.0 63.9L370.7 64.0L368.5 64.1L366.2 64.3L363.9 64.4L361.6 64.6L359.3 64.7L356.9 64.8L354.6 65.0L352.2 65.1L349.8 65.3L347.4 65.4L345.0 65.6L342.6 65.7L340.2 65.9L337.7 66.0L335.3 66.2L332.8 66.3L330.3 66.5L327.8 66.6L325.3 66.8L322.8 66.9L320.2 67.1L317.6 67.3L315.1 67.4L312.5 67.6L309.9 67.7L307.2 67.9L304.6 68.1L301.9 68.2L299.3 68.4L296.6 68.5L293.9 68.7L291.1 68.9L288.4 69.0L285.6 69.2L282.9 69.4L280.1 69.6L277.3 69.7L274.4 69.9L271.6 70.1L268.7 70.3L265.8 70.4L262.9 70.6L260.0 70.8L257.1 71.0L254.1 71.1L251.1 71.3L248.2 71.5L245.1 71.7L242.1 71.9L239.1 72.1L236.0 72.3L232.9 72.5L229.8 72.6L226.6 72.8L223.5 73.0L220.3 73.2L217.1 73.4L213.9 73.6L210.7 73.8L207.4 74.0L204.1 74.2L200.8 74.4L197.5 74.6L194.1 74.8L190.8 75.0L187.4 75.2L183.9 75.5L180.5 75.7L177.0 75.9L173.5 76.1L170.0 76.3L166.5 76.5L162.9 76.7L159.3 77.0L155.7 77.2L152.1 77.4L148.4 77.6L144.7 77.9L141.0 78.1L137.2 78.3L133.5 78.5L129.7 78.8L125.8 79.0L122.0 79.3L118.1 79.5L114.2 79.7L110.2 80.0L106.3 80.2L102.3 80.5L98.2 80.7L94.2 81.0L90.1 81.2L85.9 81.5L81.8 81.7L77.6 82.0L73.4 82.2L69.1 82.5L64.8 82.8L60.5 83.0L56.2 83.3L51.8 83.6L47.4 83.8L42.9 84.1L38.4 84.4L33.9 84.7L29.3 84.9L24.7 85.2L20.1 85.5L15.4 85.8L10.7 86.1L6.0 86.4L1.2 86.7L-3.7 87.0L-8.5 87.3L-13.4 87.6L-18.4 87.9L-23.4 88.2L-28.4 88.5L-33.5 88.8L-38.6 89.1L-43.8 89.4L-49.0 89.7L-54.2 90.1L-59.5 90.4L-64.8 90.7L-70.2 91.0L-75.6 91.4L-81.1 91.7L-86.7 92.0L-92.2 92.4L-97.9 92.7L-103.5 93.1L-109.3 93.4L-115.0 93.8L-120.9 94.1L-126.7 94.5L-132.7 94.9L-138.7 95.2L-144.7 95.6L-150.8 96.0L-157.0 96.4L-163.2 96.7L-169.4 97.1L-175.8 97.5L-182.2 97.9L-188.6 98.3L-195.1 98.7L-201.7 99.1L-208.3 99.5L-215.0 99.9L-221.8 100.3L-228.6 100.7L-235.5 101.2L-242.5 101.6L-249.5 102.0L-256.6 102.5L-263.8 102.9L-271.1 103.4L-278.4 103.8L-285.8 104.3L-293.3 104.7L-300.8 105.2L-308.4 105.6L-316.1 106.1L-323.9 106.6L-331.8 107.1L-339.7 107.6L-347.8 108.1L-355.9 108.6L-364.1 109.1L-372.4 109.6L-380.8 110.1L-389.2 110.6L-397.8 111.1L-406.5 111.7L-415.2 112.2L-424.1 112.7L-433.0 113.3L-442.1 113.8L-451.2 114.4L-460.5 115.0L-469.9 115.5L-479.3 116.1L-488.9 116.7L-498.6 117.3L-508.4 117.9L-518.4 118.5L-528.4 119.1L-538.6 119.8L-548.8 120.4L-559.2 121.0L-569.8 121.7L-580.4 122.3L-591.2 123.0L-602.1 123.7L-613.2 124.3L-624.4 125.0L-635.7 125.7L-647.2 126.4L-658.8 127.1L-670.6 127.9L-682.5 128.6L-694.6 129.3L-706.9 130.1L-719.3 130.8L-731.8 131.6L-744.6 132.4L-757.5 133.2L-770.5 134.0L-783.8 134.8L-797.2 135.6L-810.9 136.4L-824.7 137.3L-838.7 138.2L-852.9 139.0L-867.3 139.9L-881.9 140.8L-896.7 141.7L-911.7 142.6L-927.0 143.6L-942.5 144.5L-958.2 145.5L-974.1 146.5L-990.3 147.5L-1006.7 148.5L-1023.4 149.5L-1040.3 150.5L-1057.5 151.6L-1075.0 152.6L-1092.7 153.7L-1110.7 154.8L-1129.0 156.0L-1147.6 157.1L-1166.5 158.3L-1185.7 159.4L-1205.3 160.6L-1225.1 161.9L-1245.3 163.1L-1265.8 164.3L-1286.7 165.6L-1307.9 166.9L-1329.5 168.3L-1351.5 169.6L-1373.9 171.0L-1396.7 172.4L-1419.9 173.8L-1443.5 175.2L-1467.5 176.7L-1492.0 178.2L-1516.9 179.7L-1542.3 181.3L-1568.2 182.9L-1594.6 184.5L-1621.5 186.2L-1649.0 187.8L-1676.9 189.6L-1705.5 191.3L-1734.6 193.1L-1764.3 194.9L-1794.6 196.8L-1825.5 198.7L-1857.1 200.6L-1889.4 202.6L-1922.3 204.6L-1956.0 206.7L-1990.4 208.8L-2025.6 210.9L-2061.5 213.1L-2098.3 215.4L-2135.9 217.7L-2174.4 220.1L-2213.9 222.5L-2254.2 225.0L-2295.5 227.5L-2337.8 230.1L-2367.0 232.7L-2367.0 235.5L-2367.0 238.3L-2367.0 241.1L-2367.0 244.1L-2367.0 247.1L-2367.0 250.2L-2367.0 253.4L-2367.0 256.6L-2367.0 260.0L-2367.0 263.4L-2367.0 267.0L-2367.0 270.6L-2367.0 274.4L-2367.0 278.3L-2367.0 282.3L-2367.0 286.4L-2367.0 290.6L-2367.0 295.0L-2367.0 299.5L-2367.0 304.2L-2367.0 309.0L-2367.0 309.0L-2367.0 313.9L-2367.0 319.0L-2367.0 324.3L-2367.0 329.7L-2367.0 335.4L-2367.0 341.2L-2367.0 347.3L-2367.0 353.6L-2367.0 360.2L-2367.0 367.0L-2367.0 374.1L-2367.0 381.4L-2367.0 389.1L-2367.0 397.1L-2367.0 405.5L-2367.0 414.2L-2367.0 423.3L-2367.0 432.9L-2367.0 442.9L-2367.0 453.4L-2367.0 464.4L-2367.0 476.0L-2367.0 488.2L-2367.0 501.1L-2367.0 514.7L-2367.0 529.0L-2367.0 544.3L-2367.0 560.4L-2367.0 577.6L-2367.0 595.9L-2367.0 615.4L-2367.0 636.2L-2367.0 658.6L-2367.0 682.6L-2367.0 708.5L-2367.0 736.5L-2367.0 766.8L-2367.0 799.8L-2367.0 835.8L-2367.0 875.3L-2367.0 918.7L-2367.0 966.8L-2367.0 1020.3L-2367.0 1080.1L-2367.0 1147.5L-2367.0 1224.0L-2367.0 1311.6L-2367.0 1412.9L-2367.0 1531.3L-2367.0 1671.6L-2367.0 1840.6L-2367.0 2047.9L-2367.0 2308.2L-2367.0 2645.1L-2367.0 2870.0L-2367.0 2870.0L-2367.0 2870.0L-2367.0 2870.0L2633.0 2870.0L2633.0 2870.0L2633.0 2870.0L2633.0 2870.0L2633.0 2685.0L2633.0 2335.1L2633.0 2066.2L2633.0 1853.2L2633.0 1680.3L2633.0 1537.1L2633.0 1416.5L2633.0 1313.7L2633.0 1224.9L2633.0 1147.4L2633.0 1079.3L2633.0 1018.9L2633.0 965.0L2633.0 916.6L2633.0 872.9L2633.0 833.2L2633.0 797.0L2633.0 763.9L2633.0 733.5L2633.0 705.4L2633.0 679.5L2633.0 655.4L2633.0 633.0L2633.0 612.1L2633.0 592.6L2633.0 574.3L2633.0 557.2L2633.0 541.0L2633.0 525.8L2633.0 511.5L2633.0 497.9L2633.0 485.1L2633.0 472.9L2633.0 461.3L2633.0 450.3L2633.0 439.8L2633.0 429.9L2633.0 420.3L2633.0 411.2L2633.0 402.5L2633.0 394.2L2633.0 386.2L2633.0 378.6L2633.0 371.3L2633.0 364.2L2633.0 357.4L2633.0 350.9L2633.0 344.6L2633.0 338.6L2633.0 332.8L2633.0 327.2L2633.0 321.7L2633.0 316.5L2633.0 311.4L2633.0 306.5L2633.0 301.8L2633.0 297.2L2633.0 292.7L2633.0 288.4L2633.0 288.4L2633.0 284.3L2633.0 280.3L2633.0 276.4L2633.0 272.6L2633.0 269.0L2633.0 265.4L2633.0 261.9L2633.0 258.6L2633.0 255.3L2633.0 252.1L2633.0 249.0L2633.0 245.9L2633.0 243.0L2633.0 240.1L2633.0 237.3L2633.0 234.6L2633.0 231.9L2633.0 229.3L2633.0 226.7L2633.0 224.2L2633.0 221.8L2633.0 219.4L2633.0 217.1L2633.0 214.9L2633.0 212.6L2633.0 210.5L2633.0 208.3L2633.0 206.3L2633.0 204.2L2633.0 202.2L2633.0 200.3L2633.0 198.4L2633.0 196.5L2633.0 194.7L2633.0 192.9L2633.0 191.1L2633.0 189.4L2633.0 187.7L2633.0 186.0L2633.0 184.4L2633.0 182.8L2633.0 181.2L2633.0 179.7L2619.1 178.2L2594.6 176.7L2570.5 175.3L2546.9 173.8L2523.6 172.4L2500.8 171.0L2478.4 169.7L2456.3 168.3L2434.7 167.0L2413.4 165.7L2392.4 164.5L2371.8 163.2L2351.6 162.0L2331.6 160.8L2312.0 159.6L2292.7 158.4L2273.8 157.3L2255.1 156.2L2236.7 155.0L2218.6 154.0L2200.8 152.9L2183.2 151.8L2165.9 150.8L2148.9 149.7L2132.2 148.7L2115.6 147.7L2099.4 146.7L2083.3 145.8L2067.5 144.8L2052.0 143.9L2036.6 142.9L2021.5 142.0L2006.6 141.1L1991.9 140.2L1977.4 139.4L1963.1 138.5L1949.0 137.6L1935.1 136.8L1921.3 136.0L1907.8 135.1L1894.5 134.3L1881.3 133.5L1868.3 132.7L1855.4 132.0L1842.8 131.2L1830.3 130.4L1817.9 129.7L1805.8 129.0L1793.7 128.2L1781.9 127.5L1770.1 126.8L1758.6 126.1L1747.1 125.4L1735.8 124.7L1724.7 124.1L1713.6 123.4L1702.8 122.7L1692.0 122.1L1681.4 121.4L1670.9 120.8L1660.5 120.2L1650.2 119.6L1640.1 118.9L1630.1 118.3L1620.2 117.7L1610.4 117.1L1600.7 116.6L1591.1 116.0L1581.7 115.4L1572.3 114.8L1563.1 114.3L1553.9 113.7L1544.9 113.2L1535.9 112.6L1527.1 112.1L1518.3 111.6L1509.7 111.0L1501.1 110.5L1492.6 110.0L1484.2 109.5L1475.9 109.0L1467.7 108.5L1459.6 108.0L1451.6 107.5L1443.6 107.0L1435.7 106.6L1428.0 106.1L1420.2 105.6L1412.6 105.2L1405.0 104.7L1397.6 104.3L1390.2 103.8L1382.8 103.4L1375.6 102.9L1368.4 102.5L1361.2 102.1L1354.2 101.6L1347.2 101.2L1340.3 100.8L1333.4 100.4L1326.7 100.0L1319.9 99.6L1313.3 99.2L1306.7 98.8L1300.2 98.4L1293.7 98.0L1287.3 97.6L1280.9 97.2L1274.6 96.8L1268.4 96.4L1262.2 96.1L1256.1 95.7L1250.0 95.3L1244.0 95.0L1238.1 94.6L1232.2 94.2L1226.3 93.9L1220.5 93.5L1214.8 93.2L1209.1 92.8L1203.4 92.5L1197.8 92.2L1192.3 91.8L1186.7 91.5L1181.3 91.2L1175.9 90.8L1170.5 90.5L1165.2 90.2L1159.9 89.9L1154.7 89.6L1149.5 89.2L1144.4 88.9L1139.3 88.6L1134.2 88.3L1129.2 88.0L1124.2 87.7L1119.3 87.4L1114.4 87.1L1109.5 86.8L1104.7 86.5L1099.9 86.2L1095.2 86.0L1090.5 85.7L1085.8 85.4L1081.2 85.1L1076.6 84.8L1072.0 84.6L1067.5 84.3L1063.0 84.0L1058.6 83.7L1054.2 83.5L1049.8 83.2L1045.4 82.9L1041.1 82.7L1036.8 82.4L1032.6 82.2L1028.4 81.9L1024.2 81.7L1020.0 81.4L1015.9 81.2L1011.8 80.9L1007.7 80.7L1003.7 80.4L999.7 80.2L995.7 79.9L991.8 79.7L987.9 79.5L984.0 79.2L980.1 79.0L976.3 78.8L972.5 78.5L968.7 78.3L964.9 78.1L961.2 77.8L957.5 77.6L953.8 77.4L950.2 77.2L946.6 77.0L943.0 76.7L939.4 76.5L935.9 76.3L932.3 76.1L928.8 75.9L925.4 75.7L921.9 75.5L918.5 75.3L915.1 75.1L911.7 74.8L908.4 74.6L905.0 74.4L901.7 74.2L898.4 74.0L895.1 73.8L891.9 73.6L888.7 73.5L885.5 73.3L882.3 73.1L879.1 72.9L876.0 72.7L872.8 72.5L869.7 72.3L866.7 72.1L863.6 71.9L860.6 71.8L857.5 71.6L854.5 71.4L851.5 71.2L848.6 71.0L845.6 70.8L842.7 70.7L839.8 70.5L836.9 70.3L834.0 70.1L831.2 70.0L828.3 69.8L825.5 69.6L822.7 69.5L819.9 69.3L817.1 69.1L814.4 69.0L811.7 68.8L808.9 68.6L806.2 68.5L803.5 68.3L800.9 68.1L798.2 68.0L795.6 67.8L793.0 67.7L790.4 67.5L787.8 67.3L785.2 67.2L782.6 67.0L780.1 66.9L777.5 66.7L775.0 66.6L772.5 66.4L770.0 66.3L767.6 66.1L765.1 66.0L762.7 65.8L760.2 65.7L757.8 65.5L755.4 65.4L753.0 65.2L750.6 65.1L748.3 65.0L745.9 64.8L743.6 64.7L741.3 64.5L738.9 64.4L736.6 64.3L734.4 64.1L732.1 64.0L729.8 63.8L727.6 63.7L725.3 63.6L723.1 63.4L720.9 63.3L718.7 63.2L716.5 63.0L714.4 62.9L712.2 62.8L710.0 62.6L707.9 62.5L705.8 62.4L703.7 62.3L701.5 62.1L699.5 62.0L697.4 61.9L695.3 61.7L693.2 61.6L691.2 61.5L689.1 61.4L687.1 61.3L685.1 61.1L683.1 61.0L681.1 60.9L679.1 60.8L677.1 60.6L675.2 60.5L673.2 60.4L671.2 60.3L669.3 60.2L667.4 60.1L665.5 59.9L663.6 59.8L661.7 59.7L659.8 59.6L657.9 59.5L656.0 59.4L654.2 59.3L652.3 59.1L650.5 59.0L648.6 58.9L646.8 58.8L645.0 58.7L643.2 58.6L641.4 58.5L639.6 58.4L637.8 58.3L636.1 58.2L634.3 58.1L632.5 57.9L630.8 57.8L629.1 57.7L627.3 57.6L625.6 57.5L623.9 57.4L622.2 57.3L620.5 57.2L618.8 57.1L617.1 57.0L615.5 56.9L613.8 56.8L612.2 56.7L610.5 56.6L608.9 56.5L607.2 56.4L605.6 56.3L604.0 56.2L602.4 56.1L600.8 56.0L599.2 55.9L597.6 55.8L596.0 55.7L594.5 55.6L592.9 55.5L591.3 55.5L589.8 55.4L588.2 55.3L586.7 55.2L585.2 55.1L583.6 55.0L582.1 54.9L580.6 54.8L579.1 54.7L577.6 54.6L576.1 54.5L574.7 54.4L573.2 54.4L571.7 54.3L570.2 54.2L568.8 54.1L567.3 54.0L565.9 53.9L564.5 53.8L563.0 53.7L561.6 53.7L560.2 53.6L558.8 53.5L557.4 53.4L556.0 53.3L554.6 53.2L553.2 53.1L551.8 53.1L550.4 53.0Z" fill="#fefefe"/>
<g clip-path="url(#cPlane)">
<path d="M-66247.4 5657.4L-3325.9 290.7M66734.6 5657.4L4180.0 272.7M-64637.5 5657.4L-3061.9 274.5M65142.8 5657.4L3947.9 258.6M-63027.5 5657.4L-2827.2 260.1M63551.0 5657.4L3739.8 246.0M-61417.5 5657.4L-2617.1 247.2M61959.3 5657.4L3552.0 234.7M-59807.6 5657.4L-2427.9 235.6M60367.5 5657.4L3381.8 224.4M-58197.6 5657.4L-2256.6 225.1M58775.7 5657.4L3226.9 215.0M-56587.7 5657.4L-2100.9 215.6M57184.0 5657.4L3085.2 206.4M-54977.7 5657.4L-1958.7 206.8M55592.2 5657.4L2955.1 198.5M-53367.7 5657.4L-1828.3 198.8M54000.4 5657.4L2835.2 191.3M-50147.8 5657.4L-1597.6 184.7M50816.9 5657.4L2621.8 178.4M-48537.8 5657.4L-1495.0 178.4M49225.1 5657.4L2526.4 172.6M-46927.9 5657.4L-1399.7 172.6M47633.4 5657.4L2437.5 167.2M-45317.9 5657.4L-1310.9 167.1M46041.6 5657.4L2354.4 162.2M-43707.9 5657.4L-1228.1 162.0M44449.8 5657.4L2276.6 157.5M-42098.0 5657.4L-1150.6 157.3M42858.1 5657.4L2203.6 153.0M-40488.0 5657.4L-1078.0 152.8M41266.3 5657.4L2135.0 148.9M-38878.1 5657.4L-1009.7 148.6M39674.5 5657.4L2070.4 145.0M-37268.1 5657.4L-945.4 144.7M38082.8 5657.4L2009.4 141.3M-34048.2 5657.4L-827.6 137.5M34899.2 5657.4L1897.2 134.5M-32438.2 5657.4L-773.4 134.2M33307.5 5657.4L1845.6 131.4M-30828.2 5657.4L-722.1 131.0M31715.7 5657.4L1796.5 128.4M-29218.3 5657.4L-673.5 128.0M30123.9 5657.4L1749.9 125.6M-27608.3 5657.4L-627.2 125.2M28532.2 5657.4L1705.5 122.9M-25998.4 5657.4L-583.2 122.5M26940.4 5657.4L1663.2 120.3M-24388.4 5657.4L-541.3 119.9M25348.6 5657.4L1622.8 117.9M-22778.4 5657.4L-501.4 117.5M23756.9 5657.4L1584.3 115.6M-21168.5 5657.4L-463.2 115.1M22165.1 5657.4L1547.5 113.3M-17948.5 5657.4L-391.9 110.8M18981.6 5657.4L1478.5 109.2M-16338.6 5657.4L-358.5 108.7M17389.8 5657.4L1446.2 107.2M-14728.6 5657.4L-326.5 106.8M15798.0 5657.4L1415.1 105.3M-13118.6 5657.4L-295.8 104.9M14206.3 5657.4L1385.3 103.5M-11508.7 5657.4L-266.3 103.1M12614.5 5657.4L1356.7 101.8M-9898.7 5657.4L-238.0 101.3M11022.7 5657.4L1329.1 100.1M-8288.8 5657.4L-210.8 99.7M9431.0 5657.4L1302.6 98.5M-6678.8 5657.4L-184.6 98.1M7839.2 5657.4L1277.0 97.0M-5068.8 5657.4L-159.4 96.5M6247.4 5657.4L1252.4 95.5M-1848.9 5657.4L-111.6 93.6M3063.9 5657.4L1205.7 92.6M-238.9 5657.4L-89.0 92.2M1472.1 5657.4L1183.6 91.3M1371.0 5657.4L-67.1 90.8M-119.6 5657.4L1162.2 90.0M2981.0 5657.4L-46.0 89.6M-1711.4 5657.4L1141.5 88.8M4591.0 5657.4L-25.6 88.3M-3303.2 5657.4L1121.5 87.5M6200.9 5657.4L-5.9 87.1M-4894.9 5657.4L1102.1 86.4M7810.9 5657.4L13.2 85.9M-6486.7 5657.4L1083.4 85.2M9420.8 5657.4L31.7 84.8M-8078.5 5657.4L1065.2 84.1M11030.8 5657.4L49.6 83.7M-9670.2 5657.4L1047.6 83.1M14250.7 5657.4L83.8 81.6M-12853.8 5657.4L1013.9 81.0M15860.7 5657.4L100.2 80.6M-14445.5 5657.4L997.8 80.1M17470.7 5657.4L116.0 79.6M-16037.3 5657.4L982.2 79.1M19080.6 5657.4L131.4 78.7M-17629.1 5657.4L967.0 78.2M20690.6 5657.4L146.4 77.8M-19220.8 5657.4L952.2 77.3M22300.5 5657.4L160.9 76.9M-20812.6 5657.4L937.8 76.4M23910.5 5657.4L175.0 76.0M-22404.4 5657.4L923.9 75.6M25520.5 5657.4L188.8 75.2M-23996.1 5657.4L910.3 74.8M27130.4 5657.4L202.2 74.3M-25587.9 5657.4L897.1 74.0M30350.4 5657.4L227.9 72.8M-28771.4 5657.4L871.6 72.4M31960.3 5657.4L240.2 72.0M-30363.2 5657.4L859.4 71.7M33570.3 5657.4L252.3 71.3M-31955.0 5657.4L847.5 71.0M35180.3 5657.4L264.0 70.5M-33546.7 5657.4L835.9 70.3M36790.2 5657.4L275.4 69.8M-35138.5 5657.4L824.5 69.6M38400.2 5657.4L286.6 69.2M-36730.3 5657.4L813.5 68.9M40010.1 5657.4L297.5 68.5M-38322.0 5657.4L802.7 68.2M41620.1 5657.4L308.1 67.8M-39913.8 5657.4L792.1 67.6M43230.1 5657.4L318.4 67.2M-41505.6 5657.4L781.8 67.0M46450.0 5657.4L338.4 66.0M-44689.1 5657.4L761.9 65.8M48060.0 5657.4L348.1 65.4M-46280.9 5657.4L752.3 65.2M49669.9 5657.4L357.5 64.8M-47872.6 5657.4L743.0 64.6M51279.9 5657.4L366.8 64.2M-49464.4 5657.4L733.8 64.1M52889.8 5657.4L375.8 63.7M-51056.1 5657.4L724.8 63.5M54499.8 5657.4L384.6 63.1M-52647.9 5657.4L716.0 63.0M56109.8 5657.4L393.3 62.6M-54239.7 5657.4L707.4 62.5M57719.7 5657.4L401.7 62.1M-55831.4 5657.4L699.0 62.0M59329.7 5657.4L410.0 61.6M-57423.2 5657.4L690.8 61.5M62549.6 5657.4L426.0 60.6M-60606.7 5657.4L674.8 60.5M64159.6 5657.4L433.8 60.1M-62198.5 5657.4L667.0 60.0M65769.6 5657.4L441.4 59.7M-63790.3 5657.4L659.5 59.6M67379.5 5657.4L448.8 59.2M-65382.0 5657.4L652.0 59.1M45250.5 3718.1L456.1 58.8M-66973.8 5657.4L644.7 58.7M25205.0 2033.5L463.3 58.3M-43552.5 3633.6L637.6 58.3M17693.7 1402.2L470.3 57.9M-24153.0 2018.3L630.6 57.8M13760.4 1071.7L477.2 57.5M-16726.4 1399.9L623.7 57.4M11340.3 868.3L483.9 57.1M-12802.5 1073.2L617.0 57.0M8517.3 631.1L497.1 56.3M-8727.4 733.9L603.9 56.2M7622.3 555.8L503.4 55.9M-7534.0 634.5L597.5 55.8M6921.9 497.0L509.7 55.5M-6630.3 559.2L591.2 55.4M6358.9 449.7L515.8 55.1M-5922.2 500.3L585.1 55.1M5896.4 410.8L521.9 54.7M-5352.4 452.8L579.0 54.7M5509.7 378.3L527.8 54.4M-4883.9 413.8L573.1 54.4M5181.6 350.7L533.6 54.0M-4492.0 381.2L567.3 54.0M4899.8 327.0L539.3 53.7M-4159.3 353.5L561.6 53.7M4655.0 306.5L544.9 53.3M-3873.3 329.7L556.0 53.3" stroke="#b2b2b2" stroke-width="1" fill="none" mask="url(#mMinor)"/>
<path d="M-67857.4 5657.4L-3624.9 309.0M68326.3 5657.4L4440.4 288.4M-51757.8 5657.4L-1708.3 191.5M52408.7 5657.4L2724.5 184.6M-35658.1 5657.4L-884.8 141.0M36491.0 5657.4L1951.8 137.8M-19558.5 5657.4L-426.8 112.9M20573.3 5657.4L1512.3 111.2M-3458.9 5657.4L-135.1 95.0M4655.7 5657.4L1228.6 94.0M12640.8 5657.4L67.0 82.6M-11262.0 5657.4L1030.5 82.0M28740.4 5657.4L215.2 73.5M-27179.7 5657.4L884.2 73.2M44840.0 5657.4L328.6 66.6M-43097.3 5657.4L771.8 66.4M60939.7 5657.4L418.1 61.1M-59015.0 5657.4L682.7 61.0M9701.1 730.5L490.6 56.7M-10376.1 871.1L610.3 56.6M4440.4 288.4L550.4 53.0M-3624.9 309.0L550.4 53.0" stroke="#828282" stroke-width="1" fill="none" mask="url(#mMajor)"/>
</g>
<g fill="#6680a8" opacity="0.97"><polygon points="373.0,385.6 433.0,357.5 488.0,365.0 535.0,394.6 475.4,428.5 412.6,417.9"/><path d="M401 220.8L489 225.2C506 226.5 505 243 488 242L400 237.5C383 236.5 384 220 401 220.8Z"/><ellipse cx="678" cy="256" rx="53" ry="10.5" transform="rotate(5 678 256)"/><ellipse cx="777" cy="378" rx="50" ry="19.5" transform="rotate(9 777 378)"/></g><path d="M573.4 128Q575 102 595 97.19999999999999Q624.4 94 624.4 128L623 173Q621 199.7 597 199.7Q573 199 573.4 173Z" fill="url(#capg)"/><path d="M573.4 128Q575 102 595 97.19999999999999Q624.4 94 624.4 128L623 173Q621 199.7 597 199.7Q573 199 573.4 173Z" fill="url(#capTop)"/><path d="M573.4 128Q575 102 595 97.19999999999999Q624.4 94 624.4 128L623 173Q621 199.7 597 199.7Q573 199 573.4 173Z" fill="url(#capBot)"/><circle cx="722.5" cy="304.6" r="37.8" fill="url(#sphg)"/><polygon points="382.0,241.8 307.7,262.3 348.5,287.0 425.6,263.0" fill="#fff6f2"/><polygon points="307.7,262.3 348.5,287.0 362.0,364.4 321.0,334.8" fill="#c6c8d0"/><polygon points="348.5,287.0 425.6,263.0 433.0,334.8 362.0,364.4" fill="#7c808c"/><path d="M385 244L391.5 309.3L322.4 332.3M391.5 309.3L431.70000000000005 333.6" stroke="#a8c0a0" stroke-width="0.7" fill="none" opacity="0.45"/><path d="M307.70000000000005 262.3L348.5 287L425.6 263M348.5 287L362 364.4" stroke="#8ce070" stroke-width="0.9" fill="none"/><polygon points="382.0,241.8 307.7,262.3 321.0,334.8 362.0,364.4 433.0,334.8 425.6,263.0" fill="none" stroke="#ff6a00" stroke-width="2.8" stroke-linejoin="round"/><path d="M349 109Q350 103.5 373 103Q397 102.5 398.5 108L408.5 195Q409 204.5 383 204.5Q364 204.5 362 199Z" fill="url(#cylg)"/><ellipse cx="374" cy="107.5" rx="23" ry="4.2" fill="#f4f0ea" transform="rotate(-2 374 107.5)"/><path d="M349 109Q350 103.5 373 103Q397 102.5 398.5 108L408.5 195Q409 204.5 383 204.5Q364 204.5 362 199Z" fill="none" stroke="#ff6a00" stroke-width="4" stroke-linejoin="round"/><path d="M353 132Q378 138 400 128M358 181Q383 187 406 172M389 132L395 200" stroke="#7ee070" stroke-width="0.7" fill="none" opacity="0.8"/><polygon points="353.3,177.5 371.6,174.2 374.4,194.2 356.7,198.0" fill="#5a8cf0" fill-opacity="0.35" stroke="#4a7cf0" stroke-width="0.8"/><polygon points="371.6,174.2 383.2,178.6 385.5,197.0 374.4,194.2" fill="#e85050" fill-opacity="0.35" stroke="#e05050" stroke-width="0.8"/><polygon points="356.7,198.0 374.4,194.2 385.5,197.0 368.0,201.0" fill="#80e060" fill-opacity="0.4"/><path d="M306 209L374 195" stroke="#e84a30" stroke-width="0.9"/><path d="M374 195L410 208" stroke="#4a80f0" stroke-width="0.9"/><path d="M364 120L373 194" stroke="#80e050" stroke-width="0.9"/><polygon points="361.6,99.4 357.8,119.7 371.0,119.7" fill="#86e048"/><polygon points="284.6,213.5 306.2,203.0 306.2,215.5" fill="#e8401c"/><path d="M409.79999999999995 203Q405 210 410 215L425.9 213Z" fill="#3a7ef0"/><g fill="#fafafa" stroke="#a4a4a4" stroke-width="2.4"><circle cx="289.6" cy="152.60000000000002" r="6.3"/><circle cx="299.79999999999995" cy="147.2" r="6"/><rect x="289.6" y="148" width="18.6" height="15" rx="2.2"/><rect x="305" y="152.39999999999998" width="9.3" height="8" rx="2"/></g><g fill="#fcfcfc"><circle cx="289.6" cy="152.60000000000002" r="6.3"/><circle cx="299.79999999999995" cy="147.2" r="6"/><rect x="289.6" y="148" width="18.6" height="15" rx="2.2"/><rect x="305" y="152.39999999999998" width="9.3" height="8" rx="2"/></g><path d="M553.8 103.9L553.8 90.9M559.5 106.0L561.3 101.9M565.1 108.6L571.5 102.2M567.7 114.2L571.8 112.4M569.8 119.9L582.8 119.9M567.7 125.6L571.8 127.4M565.1 131.2L571.5 137.6M559.5 133.8L561.3 137.9M553.8 135.9L553.8 148.9M548.1 133.8L546.3 137.9M542.5 131.2L536.1 137.6M539.9 125.6L535.8 127.4M537.8 119.9L524.8 119.9M539.9 114.2L535.8 112.4M542.5 108.6L536.1 102.2M548.1 106.0L546.3 101.9" stroke="#a09a8a" stroke-width="4.4" stroke-linecap="round"/><path d="M553.8 103.9L553.8 90.9M559.5 106.0L561.3 101.9M565.1 108.6L571.5 102.2M567.7 114.2L571.8 112.4M569.8 119.9L582.8 119.9M567.7 125.6L571.8 127.4M565.1 131.2L571.5 137.6M559.5 133.8L561.3 137.9M553.8 135.9L553.8 148.9M548.1 133.8L546.3 137.9M542.5 131.2L536.1 137.6M539.9 125.6L535.8 127.4M537.8 119.9L524.8 119.9M539.9 114.2L535.8 112.4M542.5 108.6L536.1 102.2M548.1 106.0L546.3 101.9" stroke="#fff2d2" stroke-width="3" stroke-linecap="round"/><circle cx="553.8" cy="119.9" r="11.8" fill="#fff2d2" stroke="#a8a090" stroke-width="1"/><polygon points="1049.2,22.6 1064.6,22.6 1056.9,42.8" fill="#7cd848"/><polygon points="1049.2,22.6 1052.0,22.6 1056.9,42.8" fill="#4a9a28"/><ellipse cx="1056.9" cy="22.80000000000001" rx="7.7" ry="1.2" fill="#96ec60"/><path d="M1040 40.5Q1035.5 44.80000000000001 1040 49.19999999999999L1050 47Z" fill="#f4f4f4"/><path d="M1074 40.5Q1078.5 44.80000000000001 1074 49.19999999999999L1064 47Z" fill="#f4f4f4"/><polygon points="1056.9,44.5 1064.5,48.5 1064.5,57.0 1056.9,61.5 1049.3,57.0 1049.3,48.5" fill="#b8b8bc"/><polygon points="1056.9,44.5 1064.5,48.5 1056.9,52.5 1049.3,48.5" fill="#a8a8b0"/><polygon points="1027.5,55.6 1049.7,55.6 1035.2,70.5" fill="#c8381c"/><polygon points="1039.0,55.6 1049.7,55.6 1035.2,70.5" fill="#8a2210"/><polygon points="1064.6,55.6 1086.3,55.6 1078.6,70.5" fill="#2a60e0"/><polygon points="1064.6,55.6 1075.0,55.6 1078.6,70.5" fill="#1a3a90"/><path d="M1052.2 75Q1056.9 79.5 1061.8 75L1056.9 62Z" fill="#f4f4f4"/><text x="1054.5" y="18" font-size="10" fill="#fff" font-family="Liberation Sans">y</text><text x="1020.5" y="70.5" font-size="10" fill="#fff" font-family="Liberation Sans" font-weight="bold">x</text><text x="1088" y="70.5" font-size="10" fill="#fff" font-family="Liberation Sans" font-weight="bold">z</text><text x="1048" y="105.5" font-size="10.5" fill="#c4c4c4" font-family="Liberation Sans" letter-spacing="0.4">Persp</text><rect x="1089" y="17.5" width="7" height="4.5" fill="#c8c8c8"/><path d="M1090.5 17.5V15.5A2 2 0 0 1 1094.5 15.5V17.5" stroke="#c8c8c8" stroke-width="1.2" fill="none"/></svg>
<div class="a" style="left:367px;top:726px;width:1109px;height:1px;background:#7a7a7a;"></div>
<div class="a" style="left:1476px;top:98px;width:3px;height:1053px;background:#a2a2a2;"></div>
<div class="a" style="left:1478px;top:113px;width:1px;height:1038px;background:#7a7a7a;"></div>
<div class="a" style="left:1479px;top:113px;width:441px;height:1038px;background:#c2c2c2;"></div>
<div class="tab" style="left:1479px;top:98px;width:99px"></div>
<svg class="a" style="left:1488px;top:101px;" width="10" height="10" viewBox="0 0 10 10"><circle cx="5" cy="5" r="5" fill="#222"/><rect x="4.2" y="4.2" width="1.8" height="3.8" fill="#fff"/><rect x="3.6" y="4.2" width="1.5" height="1" fill="#fff"/><rect x="3.6" y="7.2" width="3" height="1" fill="#fff"/><circle cx="5" cy="2.6" r="0.9" fill="#fff"/></svg>
<div class="t" style="left:1502px;top:101.23px;font-size:11.3px;color:#000;letter-spacing:0.35px;">Inspector</div>
<div class="t" style="left:1585px;top:100.51px;font-size:11.21px;color:#222;">Services</div>
<svg class="a" style="left:1888px;top:103px;" width="9" height="9" viewBox="0 0 9 9"><path d="M1.8 4.5V3A2.45 2.45 0 0 1 6.7 3V4.5" fill="none" stroke="#444" stroke-width="1.3"/><rect x="0.5" y="4.2" width="7.5" height="4.8" fill="#444"/></svg>
<svg class="a" style="left:1902px;top:106px;" width="14" height="6" viewBox="0 0 14 6"><path d="M0 1.5H4L2 4Z" fill="#444"/><rect x="5" y="0.5" width="9" height="1.2" fill="#444"/><rect x="5" y="2.6" width="9" height="1.2" fill="#444"/><rect x="5" y="4.7" width="9" height="1.2" fill="#444"/></svg>
<div class="a" style="left:1479px;top:113px;width:441px;height:49px;background:#dedede;"></div>
<div class="a" style="left:1479px;top:162px;width:441px;height:1px;background:#8a8a8a;"></div>
<svg class="a" style="left:1485px;top:122px;" width="22" height="21" viewBox="0 0 22 21"><path d="M11 0.5L21 4.5L20 16L10.5 20.5L1 15L1.5 4.5Z" fill="#e65a10"/><path d="M1.5 4.5L11 0.5L21 4.5L11 8.5Z" fill="#8cc43c"/><path d="M1.5 4.5L11 8.5L10.5 20.5L1 15Z" fill="#4aa8d8"/><path d="M11 8.5L21 4.5L20 16L10.5 20.5Z" fill="#e65a10"/></svg>
<div class="a" style="left:1519px;top:123px;width:13px;height:13px;border:1px solid #555;border-radius:2px;background:linear-gradient(#a8c4e8,#6b94cc)"></div>
<svg class="a" style="left:1520px;top:121px;" width="13" height="14" viewBox="0 0 13 14"><path d="M2 6.5L5 10.5L12 1" fill="none" stroke="#000" stroke-width="2.3" stroke-linejoin="round"/></svg>
<div class="fld" style="left:1537px;top:121px;width:312px;height:16px"></div>
<div class="a" style="left:1543px;top:129px;width:9px;height:1px;background:#999;"></div>
<div class="a" style="left:1854px;top:123px;width:12px;height:12px;border:1px solid #555;border-radius:2px;background:linear-gradient(#fafafa,#d8d8d8)"></div>
<div class="t" style="left:1870px;top:123.52px;font-size:11.2px;color:#000;">Static</div>
<svg class="a" style="left:1905px;top:126px;" width="9" height="5" viewBox="0 0 9 5"><path d="M0 0H8.6L4.3 4.6Z" fill="#222"/></svg>
<div class="t" style="left:1514px;top:142.53px;font-size:11.78px;color:#000;">Tag</div>
<div class="dd" style="left:1537px;top:141px;width:174px;height:15px"></div>
<div class="t" style="left:1543px;top:144.79px;font-size:9.7px;color:#111;letter-spacing:0.15px;">Untagged</div>
<svg class="a" style="left:1702px;top:144px;" width="5" height="8" viewBox="0 0 5 8"><path d="M0 3H5L2.5 0Z M0 5H5L2.5 8Z" fill="#222"/></svg>
<div class="t" style="left:1717px;top:143.03px;font-size:11.19px;color:#000;">Layer</div>
<div class="dd" style="left:1749px;top:141px;width:165px;height:15px"></div>
<div class="t" style="left:1755px;top:144.37px;font-size:10.2px;color:#111;letter-spacing:0.15px;">Default</div>
<svg class="a" style="left:1905px;top:144px;" width="5" height="8" viewBox="0 0 5 8"><path d="M0 3H5L2.5 0Z M0 5H5L2.5 8Z" fill="#222"/></svg>
<svg class="a" style="left:1483px;top:169px;" width="9" height="8" viewBox="0 0 9 8"><path d="M0 0H9L4.5 7.8Z" fill="#7a7a7a"/></svg>
<svg class="a" style="left:1495px;top:166px;" width="14" height="12" viewBox="0 0 14 12"><path d="M7 7V0" stroke="#6cc02a" stroke-width="2"/><path d="M7 7L0.8 10.5" stroke="#2a8ee0" stroke-width="2"/><path d="M7 7L13.5 11" stroke="#e02a2a" stroke-width="2"/></svg>
<div class="t" style="left:1528px;top:167.08px;font-size:11.6px;color:#000;font-weight:bold;letter-spacing:0.2px;">Transform</div>
<svg class="a" style="left:1887px;top:165px;" width="14" height="15" viewBox="0 0 14 15"><path d="M1 2L3 0.5H12.5V13L10.5 14H1Z" fill="#2a4a80"/><rect x="3" y="1.2" width="9.5" height="11.8" fill="#f4f8ff"/><rect x="2" y="2.5" width="9" height="11.3" fill="#5a84bc" stroke="#1e3a6e" stroke-width="0.8"/><path d="M5 6Q5 4.3 6.6 4.3Q8.2 4.3 8.2 6Q8.2 7.2 6.8 7.7V9" fill="none" stroke="#dde8f8" stroke-width="1.1"/><circle cx="6.8" cy="10.8" r="0.7" fill="#dde8f8"/></svg>
<svg class="a" style="left:1905px;top:166px;" width="14" height="12" viewBox="0 0 14 12"><g transform="translate(5,5)"><circle r="2.65" fill="none" stroke="#1a1a1a" stroke-width="2.1"/><path d="M3.10 0.00L4.90 0.00M2.19 2.19L3.46 3.46M0.00 3.10L0.00 4.90M-2.19 2.19L-3.46 3.46M-3.10 0.00L-4.90 0.00M-2.19 -2.19L-3.46 -3.46M-0.00 -3.10L-0.00 -4.90M2.19 -2.19L3.46 -3.46" stroke="#1a1a1a" stroke-width="1.9"/></g><path d="M10 7.5H13.4L11.7 11Z" fill="#1a1a1a"/></svg>
<div class="t" style="left:1494.4px;top:183.28px;font-size:11.6px;color:#000;">Position</div>
<div class="t" style="left:1652px;top:183.79px;font-size:11px;color:#000;">X</div>
<div class="fld" style="left:1663px;top:181.5px;width:74px"></div>
<div class="a" style="left:1668px;top:188.5px;width:9px;height:1px;background:#9a9a9a;"></div>
<div class="t" style="left:1741px;top:183.79px;font-size:11px;color:#000;">Y</div>
<div class="fld" style="left:1752px;top:181.5px;width:75px"></div>
<div class="a" style="left:1757px;top:188.5px;width:9px;height:1px;background:#9a9a9a;"></div>
<div class="t" style="left:1831px;top:183.79px;font-size:11px;color:#000;">Z</div>
<div class="fld" style="left:1842px;top:181.5px;width:74px"></div>
<div class="a" style="left:1847px;top:188.5px;width:9px;height:1px;background:#9a9a9a;"></div>
<div class="t" style="left:1494.4px;top:201.18px;font-size:11.6px;color:#000;">Rotation</div>
<div class="t" style="left:1652px;top:201.69px;font-size:11px;color:#000;">X</div>
<div class="fld" style="left:1663px;top:199.5px;width:74px"></div>
<div class="t" style="left:1667px;top:201.52px;font-size:11.2px;color:#000;">0</div>
<div class="t" style="left:1741px;top:201.69px;font-size:11px;color:#000;">Y</div>
<div class="fld" style="left:1752px;top:199.5px;width:75px"></div>
<div class="t" style="left:1756px;top:201.52px;font-size:11.2px;color:#000;">0</div>
<div class="t" style="left:1831px;top:201.69px;font-size:11px;color:#000;">Z</div>
<div class="fld" style="left:1842px;top:199.5px;width:74px"></div>
<div class="t" style="left:1846px;top:201.52px;font-size:11.2px;color:#000;">0</div>
<div class="t" style="left:1494.4px;top:219.08px;font-size:11.6px;color:#000;">Scale</div>
<div class="t" style="left:1652px;top:219.59px;font-size:11px;color:#000;">X</div>
<div class="fld" style="left:1663px;top:217.5px;width:74px"></div>
<div class="t" style="left:1667px;top:219.42px;font-size:11.2px;color:#000;">1</div>
<div class="t" style="left:1741px;top:219.59px;font-size:11px;color:#000;">Y</div>
<div class="fld" style="left:1752px;top:217.5px;width:75px"></div>
<div class="t" style="left:1756px;top:219.42px;font-size:11.2px;color:#000;">1</div>
<div class="t" style="left:1831px;top:219.59px;font-size:11px;color:#000;">Z</div>
<div class="fld" style="left:1842px;top:217.5px;width:74px"></div>
<div class="t" style="left:1846px;top:219.42px;font-size:11.2px;color:#000;">1</div>
<div class="a" style="left:1479px;top:237px;width:441px;height:1px;background:#8a8a8a;"></div>
<svg class="a" style="left:1483px;top:244px;" width="9" height="8" viewBox="0 0 9 8"><path d="M0 0H9L4.5 7.8Z" fill="#7a7a7a"/></svg>
<svg class="a" style="left:1495px;top:240px;" width="14" height="14" viewBox="0 0 14 14"><rect x="0.5" y="0.5" width="13" height="13" rx="2.5" fill="#5ab0e8"/><path d="M4.7 1V13M9.3 1V13M1 4.7H13M1 9.3H13" stroke="#e8f6ff" stroke-width="1.2"/></svg>
<div class="t" style="left:1528px;top:241.88px;font-size:11.84px;color:#000;font-weight:bold;">Cylinder (Mesh Filter)</div>
<svg class="a" style="left:1887px;top:240px;" width="14" height="15" viewBox="0 0 14 15"><path d="M1 2L3 0.5H12.5V13L10.5 14H1Z" fill="#2a4a80"/><rect x="3" y="1.2" width="9.5" height="11.8" fill="#f4f8ff"/><rect x="2" y="2.5" width="9" height="11.3" fill="#5a84bc" stroke="#1e3a6e" stroke-width="0.8"/><path d="M5 6Q5 4.3 6.6 4.3Q8.2 4.3 8.2 6Q8.2 7.2 6.8 7.7V9" fill="none" stroke="#dde8f8" stroke-width="1.1"/><circle cx="6.8" cy="10.8" r="0.7" fill="#dde8f8"/></svg>
<svg class="a" style="left:1905px;top:241px;" width="14" height="12" viewBox="0 0 14 12"><g transform="translate(5,5)"><circle r="2.65" fill="none" stroke="#1a1a1a" stroke-width="2.1"/><path d="M3.10 0.00L4.90 0.00M2.19 2.19L3.46 3.46M0.00 3.10L0.00 4.90M-2.19 2.19L-3.46 3.46M-3.10 0.00L-4.90 0.00M-2.19 -2.19L-3.46 -3.46M-0.00 -3.10L-0.00 -4.90M2.19 -2.19L3.46 -3.46" stroke="#1a1a1a" stroke-width="1.9"/></g><path d="M10 7.5H13.4L11.7 11Z" fill="#1a1a1a"/></svg>
<div class="t" style="left:1494.4px;top:257.48px;font-size:11.6px;color:#000;">Mesh</div>
<div class="fld" style="left:1651px;top:257px;width:247px"></div>
<div class="a" style="left:1656px;top:264px;width:9px;height:1px;background:#9a9a9a;"></div>
<svg class="a" style="left:1905px;top:260px;" width="9" height="9" viewBox="0 0 9 9"><circle cx="4.5" cy="4.5" r="3.6" fill="none" stroke="#333" stroke-width="1.1"/><circle cx="4.5" cy="4.5" r="1" fill="#333"/></svg>
<div class="a" style="left:1479px;top:276px;width:441px;height:1px;background:#8a8a8a;"></div>
<svg class="a" style="left:1483px;top:283px;" width="9" height="8" viewBox="0 0 9 8"><path d="M0 0H9L4.5 7.8Z" fill="#7a7a7a"/></svg>
<svg class="a" style="left:1495px;top:279px;" width="15" height="15" viewBox="0 0 15 15"><rect x="0.5" y="0.5" width="12" height="13" rx="2.5" fill="#5ab0e8"/><path d="M4.5 1V13M8.5 1V13M1 4.5H12.5M1 8.5H12.5" stroke="#e8f6ff" stroke-width="1.1"/><ellipse cx="10" cy="11.5" rx="4.6" ry="2.8" fill="#fff" stroke="#7a8a9a" stroke-width="0.6"/><circle cx="10" cy="11.5" r="1.3" fill="#3a6a9a"/></svg>
<div class="a" style="left:1513px;top:281px;width:11px;height:11px;border:1px solid #555;border-radius:2px;background:linear-gradient(#a8c4e8,#6b94cc)"></div>
<svg class="a" style="left:1514px;top:279px;" width="11" height="12" viewBox="0 0 11 12"><path d="M2 6.5L5 10.5L10 1" fill="none" stroke="#000" stroke-width="2.3" stroke-linejoin="round"/></svg>
<div class="t" style="left:1528px;top:281.07px;font-size:11.49px;color:#000;font-weight:bold;letter-spacing:0.1px;">Mesh Renderer</div>
<svg class="a" style="left:1887px;top:279px;" width="14" height="15" viewBox="0 0 14 15"><path d="M1 2L3 0.5H12.5V13L10.5 14H1Z" fill="#2a4a80"/><rect x="3" y="1.2" width="9.5" height="11.8" fill="#f4f8ff"/><rect x="2" y="2.5" width="9" height="11.3" fill="#5a84bc" stroke="#1e3a6e" stroke-width="0.8"/><path d="M5 6Q5 4.3 6.6 4.3Q8.2 4.3 8.2 6Q8.2 7.2 6.8 7.7V9" fill="none" stroke="#dde8f8" stroke-width="1.1"/><circle cx="6.8" cy="10.8" r="0.7" fill="#dde8f8"/></svg>
<svg class="a" style="left:1905px;top:280px;" width="14" height="12" viewBox="0 0 14 12"><g transform="translate(5,5)"><circle r="2.65" fill="none" stroke="#1a1a1a" stroke-width="2.1"/><path d="M3.10 0.00L4.90 0.00M2.19 2.19L3.46 3.46M0.00 3.10L0.00 4.90M-2.19 2.19L-3.46 3.46M-3.10 0.00L-4.90 0.00M-2.19 -2.19L-3.46 -3.46M-0.00 -3.10L-0.00 -4.90M2.19 -2.19L3.46 -3.46" stroke="#1a1a1a" stroke-width="1.9"/></g><path d="M10 7.5H13.4L11.7 11Z" fill="#1a1a1a"/></svg>
<div class="t" style="left:1494.4px;top:296.67px;font-size:11.32px;color:#000;letter-spacing:0px;">Cast Shadows</div>
<div class="t" style="left:1494.4px;top:315.39px;font-size:11.12px;color:#000;letter-spacing:0px;">Receive Shadows</div>
<div class="t" style="left:1494.4px;top:332.88px;font-size:11.6px;color:#000;letter-spacing:0.25px;">Motion Vectors</div>
<div class="t" style="left:1494.4px;top:350.79px;font-size:11.59px;color:#000;letter-spacing:0px;">Materials</div>
<div class="t" style="left:1509.2px;top:369.12px;font-size:11.2px;color:#000;letter-spacing:0px;">Size</div>
<div class="t" style="left:1509.2px;top:387.01px;font-size:11.33px;color:#000;letter-spacing:0px;">Element 0</div>
<div class="t" style="left:1494.4px;top:404.85px;font-size:11.75px;color:#000;letter-spacing:0px;">Light Probes</div>
<div class="t" style="left:1494.4px;top:422.83px;font-size:11.66px;color:#000;letter-spacing:0px;">Reflection Probes</div>
<div class="t" style="left:1494.4px;top:440.63px;font-size:11.9px;color:#000;letter-spacing:0.25px;">Anchor Override</div>
<div class="dd" style="left:1651px;top:296px;width:264px;height:14px"></div>
<div class="t" style="left:1657px;top:298.79px;font-size:9.7px;color:#111;letter-spacing:0.15px;">On</div>
<svg class="a" style="left:1906px;top:299px;" width="5" height="8" viewBox="0 0 5 8"><path d="M0 3H5L2.5 0Z M0 5H5L2.5 8Z" fill="#222"/></svg>
<div class="a" style="left:1652px;top:315px;width:12px;height:12px;border:1px solid #555;border-radius:2px;background:linear-gradient(#a8c4e8,#6b94cc)"></div>
<svg class="a" style="left:1653px;top:313px;" width="12" height="13" viewBox="0 0 12 13"><path d="M2 6.5L5 10.5L11 1" fill="none" stroke="#000" stroke-width="2.3" stroke-linejoin="round"/></svg>
<div class="dd" style="left:1651px;top:332px;width:264px;height:14px"></div>
<div class="t" style="left:1657px;top:334.70px;font-size:9.8px;color:#111;letter-spacing:0.15px;">Per Object Motion</div>
<svg class="a" style="left:1906px;top:335px;" width="5" height="8" viewBox="0 0 5 8"><path d="M0 3H5L2.5 0Z M0 5H5L2.5 8Z" fill="#222"/></svg>
<svg class="a" style="left:1482px;top:353px;" width="9" height="8" viewBox="0 0 9 8"><path d="M0 0H9L4.5 7.8Z" fill="#7a7a7a"/></svg>
<div class="fld" style="left:1651px;top:367px;width:264px"></div>
<div class="t" style="left:1655px;top:369.12px;font-size:11.2px;color:#000;">1</div>
<div class="fld" style="left:1651px;top:385px;width:247px"></div>
<svg class="a" style="left:1654px;top:387px;" width="12" height="12" viewBox="0 0 12 12"><defs><radialGradient id="bs" cx="0.4" cy="0.3" r="0.7"><stop offset="0" stop-color="#bcd8f8"/><stop offset="0.6" stop-color="#4a7ab8"/><stop offset="1" stop-color="#1e3e78"/></radialGradient></defs><circle cx="6" cy="6" r="5.7" fill="url(#bs)"/></svg>
<div class="t" style="left:1667px;top:387.01px;font-size:11.8px;color:#000;">Default-Material</div>
<svg class="a" style="left:1905px;top:388px;" width="9" height="9" viewBox="0 0 9 9"><circle cx="4.5" cy="4.5" r="3.6" fill="none" stroke="#333" stroke-width="1.1"/><circle cx="4.5" cy="4.5" r="1" fill="#333"/></svg>
<div class="dd" style="left:1651px;top:404px;width:264px;height:14px"></div>
<div class="t" style="left:1657px;top:406.76px;font-size:9.74px;color:#111;letter-spacing:0.15px;">Blend Probes</div>
<svg class="a" style="left:1906px;top:407px;" width="5" height="8" viewBox="0 0 5 8"><path d="M0 3H5L2.5 0Z M0 5H5L2.5 8Z" fill="#222"/></svg>
<div class="dd" style="left:1651px;top:422px;width:264px;height:14px"></div>
<div class="t" style="left:1657px;top:424.76px;font-size:9.74px;color:#111;letter-spacing:0.15px;">Blend Probes</div>
<svg class="a" style="left:1906px;top:425px;" width="5" height="8" viewBox="0 0 5 8"><path d="M0 3H5L2.5 0Z M0 5H5L2.5 8Z" fill="#222"/></svg>
<div class="fld" style="left:1651px;top:439px;width:247px"></div>
<div class="t" style="left:1654px;top:440.54px;font-size:12.0px;color:#000;">None (Transform)</div>
<svg class="a" style="left:1905px;top:442px;" width="9" height="9" viewBox="0 0 9 9"><circle cx="4.5" cy="4.5" r="3.6" fill="none" stroke="#333" stroke-width="1.1"/><circle cx="4.5" cy="4.5" r="1" fill="#333"/></svg>
<div class="a" style="left:1479px;top:463px;width:441px;height:1px;background:#8a8a8a;"></div>
<div class="a" style="left:1479px;top:464px;width:441px;height:43px;background:#dedede;"></div>
<div class="a" style="left:1494px;top:469px;width:32px;height:32px;background:#d4d4d4;"></div>
<svg class="a" style="left:1495px;top:470px;" width="30" height="30" viewBox="0 0 30 30"><defs><radialGradient id="ws" cx="0.38" cy="0.3" r="0.75"><stop offset="0" stop-color="#ffffff"/><stop offset="0.5" stop-color="#e8eef8"/><stop offset="0.85" stop-color="#9aa8c0"/><stop offset="1" stop-color="#7a88a0"/></radialGradient></defs><circle cx="14.8" cy="14.6" r="14.5" fill="url(#ws)"/></svg>
<div class="t" style="left:1534.2px;top:469.74px;font-size:13.3px;color:#000;">Default-Material</div>
<div class="t" style="left:1534.2px;top:489.75px;font-size:11.16px;color:#666;">Shader</div>
<div class="dd" style="left:1582px;top:489px;width:332px;height:14px;background:linear-gradient(#f0f0f0,#e0e0e0);border-color:#a8a8a8"></div>
<div class="t" style="left:1588px;top:490.85px;font-size:9.86px;color:#888;letter-spacing:0.15px;">Standard</div>
<svg class="a" style="left:1905px;top:494px;" width="5" height="3" viewBox="0 0 5 3"><path d="M0 0H5L2.5 3Z" fill="#888"/></svg>
<svg class="a" style="left:1484px;top:494px;" width="8" height="9" viewBox="0 0 8 9"><path d="M0 0V8.8L7.6 4.4Z" fill="#7a7a7a"/></svg>
<svg class="a" style="left:1887px;top:469px;" width="14" height="15" viewBox="0 0 14 15"><path d="M1 2L3 0.5H12.5V13L10.5 14H1Z" fill="#2a4a80"/><rect x="3" y="1.2" width="9.5" height="11.8" fill="#f4f8ff"/><rect x="2" y="2.5" width="9" height="11.3" fill="#5a84bc" stroke="#1e3a6e" stroke-width="0.8"/><path d="M5 6Q5 4.3 6.6 4.3Q8.2 4.3 8.2 6Q8.2 7.2 6.8 7.7V9" fill="none" stroke="#dde8f8" stroke-width="1.1"/><circle cx="6.8" cy="10.8" r="0.7" fill="#dde8f8"/></svg>
<svg class="a" style="left:1905px;top:470px;" width="14" height="12" viewBox="0 0 14 12"><g transform="translate(5,5)"><circle r="2.65" fill="none" stroke="#1a1a1a" stroke-width="2.1"/><path d="M3.10 0.00L4.90 0.00M2.19 2.19L3.46 3.46M0.00 3.10L0.00 4.90M-2.19 2.19L-3.46 3.46M-3.10 0.00L-4.90 0.00M-2.19 -2.19L-3.46 -3.46M-0.00 -3.10L-0.00 -4.90M2.19 -2.19L3.46 -3.46" stroke="#1a1a1a" stroke-width="1.9"/></g><path d="M10 7.5H13.4L11.7 11Z" fill="#1a1a1a"/></svg>
<div class="a" style="left:1479px;top:507px;width:441px;height:1px;background:#8a8a8a;"></div>
<div class="a" style="left:1479px;top:508px;width:441px;height:6px;background:#c8c8c8;"></div>
<div class="a" style="left:1479px;top:513px;width:441px;height:1px;background:#8a8a8a;"></div>
<div class="a" style="left:1482px;top:522px;width:434px;height:17px;border:1px solid #9a9a9a;border-radius:2px;background:#d0d0d0"></div>
<div class="t" style="left:1486px;top:525.77px;font-size:10.31px;color:#222;">Components that are only on some of the selected objects cannot be multi-edited.</div>
<div class="a" style="left:1479px;top:543px;width:441px;height:1px;background:#8e8e8e;"></div>
<div class="btn" style="left:1582px;top:554px;width:230px;height:23px;border-color:#666;border-radius:4px;background:linear-gradient(#ffffff,#d8d8d8)"></div>
<div class="t" style="left:1650px;top:558.50px;font-size:13.0px;color:#111;">Add Component</div>
<svg class="a" style="left:1905px;top:390px;" width="16" height="22" viewBox="0 0 16 22"><path d="M5.9 3.5V17.6L9.1 14.6L11.9 20.6L14 19.6L11.5 13.6H16Z" fill="#000" stroke="#fff" stroke-width="1.1" stroke-linejoin="round"/></svg>
<div class="a" style="left:0px;top:727px;width:1476px;height:4px;background:#a2a2a2;"></div>
<div class="a" style="left:0px;top:747px;width:1475px;height:404px;background:#c2c2c2;"></div>
<div class="a" style="left:1475px;top:747px;width:1px;height:404px;background:#7a7a7a;"></div>
<div class="tab" style="left:0px;top:731px;width:98px"></div>
<svg class="a" style="left:8px;top:734px;" width="12" height="10" viewBox="0 0 12 10"><path d="M0.5 2V9.5H11.5V3H6L5 1.2H1.5Z" fill="#8a8a8a" stroke="#444" stroke-width="1"/></svg>
<div class="t" style="left:23px;top:734.27px;font-size:11.5px;color:#000;letter-spacing:0.3px;">Project</div>
<svg class="a" style="left:110px;top:733px;" width="10" height="12" viewBox="0 0 10 12"><rect x="0.5" y="0.5" width="9" height="11" fill="#fff" stroke="#333" stroke-width="1"/><path d="M2.5 3H7M2.5 5H6M2.5 7H7.5M2.5 9H5.5" stroke="#333" stroke-width="0.8"/></svg>
<div class="t" style="left:123px;top:734.18px;font-size:11.6px;color:#222;letter-spacing:0.1px;">Console</div>
<svg class="a" style="left:1444px;top:737px;" width="9" height="9" viewBox="0 0 9 9"><path d="M1.8 4.5V3A2.45 2.45 0 0 1 6.7 3V4.5" fill="none" stroke="#444" stroke-width="1.3"/><rect x="0.5" y="4.2" width="7.5" height="4.8" fill="#444"/></svg>
<svg class="a" style="left:1458px;top:740px;" width="14" height="6" viewBox="0 0 14 6"><path d="M0 1.5H4L2 4Z" fill="#444"/><rect x="5" y="0.5" width="9" height="1.2" fill="#444"/><rect x="5" y="2.6" width="9" height="1.2" fill="#444"/><rect x="5" y="4.7" width="9" height="1.2" fill="#444"/></svg>
<div class="ptb" style="left:0;top:747px;width:1475px"></div>
<div class="a" style="left:5px;top:748px;width:1px;height:16px;background:#a0a0a0;"></div>
<div class="a" style="left:52px;top:748px;width:1px;height:16px;background:#a0a0a0;"></div>
<div class="t" style="left:12px;top:751.37px;font-size:9.6px;color:#000;">Create</div>
<svg class="a" style="left:44px;top:754px;" width="5" height="3" viewBox="0 0 5 3"><path d="M0 0H4.5L2.25 3Z" fill="#333"/></svg>
<div class="a" style="left:1094px;top:749px;width:299px;height:14px;border:1px solid #8c8c8c;border-radius:7px;background:linear-gradient(#d0d0d0,#e4e4e4 40%,#e6e6e6)"></div>
<svg class="a" style="left:1098px;top:752px;" width="12" height="9" viewBox="0 0 12 9"><circle cx="3.5" cy="3.5" r="2.6" fill="none" stroke="#888" stroke-width="1"/><path d="M5.3 5.4L7.6 7.8" stroke="#888" stroke-width="1.1"/></svg>
<div class="a" style="left:1403px;top:748px;width:1px;height:16px;background:#a0a0a0;"></div>
<div class="a" style="left:1425px;top:748px;width:1px;height:16px;background:#a0a0a0;"></div>
<div class="a" style="left:1447px;top:748px;width:1px;height:16px;background:#a0a0a0;"></div>
<div class="a" style="left:1469px;top:748px;width:1px;height:16px;background:#a0a0a0;"></div>
<svg class="a" style="left:1408px;top:750px;" width="12" height="12" viewBox="0 0 12 12"><path d="M4 1L8 8H0Z" fill="#333"/><rect x="6.5" y="6" width="5" height="5" fill="#333"/><circle cx="8.5" cy="3.5" r="2.5" fill="#333"/></svg>
<svg class="a" style="left:1430px;top:750px;" width="12" height="12" viewBox="0 0 12 12"><path d="M1 1H6L11 6L6 11L1 6Z" fill="#333"/><circle cx="3.5" cy="3.5" r="1" fill="#ccc"/></svg>
<svg class="a" style="left:1452px;top:750px;" width="12" height="12" viewBox="0 0 12 12"><path d="M6 0.5L7.6 4.2L11.5 4.4L8.5 7L9.5 11L6 8.8L2.5 11L3.5 7L0.5 4.4L4.4 4.2Z" fill="#888"/></svg>
<div class="a" style="left:225px;top:764px;width:1px;height:387px;background:#8a8a8a;"></div>
<svg class="a" style="left:4px;top:770px;" width="9" height="8" viewBox="0 0 9 8"><path d="M0 0H9L4.5 7.8Z" fill="#7a7a7a"/></svg>
<svg class="a" style="left:17px;top:766px;" width="15" height="14" viewBox="0 0 15 14"><path d="M7.5 0.5L9.6 5L14.5 5.4L10.8 8.6L12 13.5L7.5 10.9L3 13.5L4.2 8.6L0.5 5.4L5.4 5Z" fill="#f8d820" stroke="#b89a10" stroke-width="0.8"/></svg>
<div class="t" style="left:34.4px;top:768.19px;font-size:11.47px;color:#000;font-weight:bold;">Favorites</div>
<svg class="a" style="left:31px;top:781.8px;" width="15" height="14" viewBox="0 0 15 14"><circle cx="6" cy="5.8" r="4.6" fill="none" stroke="#e8c410" stroke-width="2"/><path d="M9.2 9L13 12.5" stroke="#e8c410" stroke-width="2.6" stroke-linecap="round"/></svg>
<div class="t" style="left:48.3px;top:783.85px;font-size:11.75px;color:#000;">All Materials</div>
<svg class="a" style="left:31px;top:797.9px;" width="15" height="14" viewBox="0 0 15 14"><circle cx="6" cy="5.8" r="4.6" fill="none" stroke="#e8c410" stroke-width="2"/><path d="M9.2 9L13 12.5" stroke="#e8c410" stroke-width="2.6" stroke-linecap="round"/></svg>
<div class="t" style="left:48.3px;top:799.95px;font-size:11.75px;color:#000;">All Models</div>
<svg class="a" style="left:31px;top:814.0px;" width="15" height="14" viewBox="0 0 15 14"><circle cx="6" cy="5.8" r="4.6" fill="none" stroke="#e8c410" stroke-width="2"/><path d="M9.2 9L13 12.5" stroke="#e8c410" stroke-width="2.6" stroke-linecap="round"/></svg>
<div class="t" style="left:48.3px;top:816.05px;font-size:11.75px;color:#000;">All Prefabs</div>
<svg class="a" style="left:31px;top:830.0999999999999px;" width="15" height="14" viewBox="0 0 15 14"><circle cx="6" cy="5.8" r="4.6" fill="none" stroke="#e8c410" stroke-width="2"/><path d="M9.2 9L13 12.5" stroke="#e8c410" stroke-width="2.6" stroke-linecap="round"/></svg>
<div class="t" style="left:48.3px;top:832.15px;font-size:11.75px;color:#000;">All Scripts</div>
<div class="a" style="left:0px;top:860px;width:225px;height:16px;background:#8f8f8f;"></div>
<svg class="a" style="left:4px;top:865px;" width="9" height="8" viewBox="0 0 9 8"><path d="M0 0H9L4.5 7.8Z" fill="#5a5a5a"/></svg>
<svg class="a" style="left:16px;top:863px;" width="15" height="12" viewBox="0 0 15 12"><path d="M0.5 2.2Q0.5 0.8 2 0.8H5.5L7 2.2H13.5Q14.5 2.2 14.5 3.5V10.5Q14.5 11.5 13.5 11.5H1.5Q0.5 11.5 0.5 10.5Z" fill="#5a666e" stroke="#3a4248" stroke-width="0.8"/><rect x="1.5" y="3" width="12" height="2" fill="#c8d0d4"/></svg>
<div class="t" style="left:34.4px;top:862.93px;font-size:11.66px;color:#fff;">Assets</div>
<svg class="a" style="left:30px;top:878px;" width="15" height="12" viewBox="0 0 15 12"><path d="M0.5 2.2Q0.5 0.8 2 0.8H5.5L7 2.2H13.5Q14.5 2.2 14.5 3.5V10.5Q14.5 11.5 13.5 11.5H1.5Q0.5 11.5 0.5 10.5Z" fill="#5a666e" stroke="#3a4248" stroke-width="0.8"/><rect x="1.5" y="3" width="12" height="2" fill="#c8d0d4"/></svg>
<div class="t" style="left:48.3px;top:878.55px;font-size:11.87px;color:#000;">Editor</div>
<div class="a" style="left:226px;top:764px;width:1249px;height:18px;background:linear-gradient(#e2e2e2,#d8d8d8);border-bottom:1px solid #a8a8a8;"></div>
<div class="t" style="left:232px;top:768.44px;font-size:10.7px;color:#000;font-weight:bold;">Assets</div>
<svg class="a" style="left:274px;top:770px;" width="5" height="7" viewBox="0 0 5 7"><path d="M0 0L5 3.5L0 7Z" fill="#777"/></svg>
<div class="a" style="left:226px;top:1134px;width:1249px;height:1px;background:#8a8a8a;"></div>
<div class="a" style="left:226px;top:1135px;width:1249px;height:16px;background:#dcdcdc;"></div>
<div class="a" style="left:1404px;top:1141px;width:55px;height:3px;background:#888;border-radius:2px;"></div>
<svg class="a" style="left:1430px;top:1136px;" width="12" height="12" viewBox="0 0 12 12"><defs><linearGradient id="kn" x1="0" y1="0" x2="0" y2="1"><stop offset="0" stop-color="#fff"/><stop offset="1" stop-color="#bbb"/></linearGradient></defs><circle cx="6" cy="6" r="5" fill="url(#kn)" stroke="#777" stroke-width="1"/></svg>
<svg class="a" style="left:246px;top:802px;" width="56" height="45" viewBox="0 0 56 45"><defs><linearGradient id="fg" x1="0" y1="0" x2="0" y2="1"><stop offset="0" stop-color="#6e7c86"/><stop offset="1" stop-color="#48545c"/></linearGradient></defs><path d="M1 6Q1 2 5 2H18L22 6H52Q55 6 55 9V41Q55 44 52 44H4Q1 44 1 41Z" fill="#d8d8d8" stroke="#9a9a9a" stroke-width="0.8"/><path d="M1 10H55V41Q55 44 52 44H4Q1 44 1 41Z" fill="url(#fg)"/></svg>
<div class="t" style="left:260px;top:860.17px;font-size:10.2px;color:#222;">Editor</div>
<div class="a" style="left:440px;top:797px;width:401px;height:56px;background:#4f4f4f;border-radius:0 9px 9px 0;"></div>
<svg class="a" style="left:0;top:0" width="1475" height="1151"><defs>
<radialGradient id="sph_blue" cx="0.35" cy="0.3" r="0.8"><stop offset="0" stop-color="#7a8aa0"/><stop offset="0.6" stop-color="#3a4658"/><stop offset="1" stop-color="#1e2630"/></radialGradient>
<radialGradient id="sph_metal" cx="0.4" cy="0.3" r="0.8"><stop offset="0" stop-color="#d8e0e8"/><stop offset="0.5" stop-color="#8c9cae"/><stop offset="1" stop-color="#5a6878"/></radialGradient>
<radialGradient id="sph_wood" cx="0.4" cy="0.3" r="0.8"><stop offset="0" stop-color="#8a6a5e"/><stop offset="0.6" stop-color="#5e4038"/><stop offset="1" stop-color="#3a2620"/></radialGradient>
<radialGradient id="sph_rock" cx="0.4" cy="0.3" r="0.8"><stop offset="0" stop-color="#f0f4f8"/><stop offset="0.6" stop-color="#b0bac4"/><stop offset="1" stop-color="#6a747e"/></radialGradient>
<radialGradient id="sph_tile" cx="0.4" cy="0.3" r="0.8"><stop offset="0" stop-color="#f4ece4"/><stop offset="0.6" stop-color="#c0b0a4"/><stop offset="1" stop-color="#7a6c62"/></radialGradient>
<radialGradient id="sph_tile2" cx="0.4" cy="0.3" r="0.8"><stop offset="0" stop-color="#e4eaf4"/><stop offset="0.6" stop-color="#9aa2b4"/><stop offset="1" stop-color="#5a6274"/></radialGradient>
<pattern id="p_dark" width="18" height="14" patternUnits="userSpaceOnUse"><rect width="18" height="14" fill="#3a4444"/><path d="M0 0.5H18M0 7.5H18M6 0V7M14 7V14" stroke="#141a1a" stroke-width="2"/></pattern>
<pattern id="p_white" width="18" height="14" patternUnits="userSpaceOnUse"><rect width="18" height="14" fill="#e6e6e6"/><path d="M0 0.5H18M0 7.5H18M6 0V7M14 7V14" stroke="#333" stroke-width="1.5"/></pattern>
<pattern id="p_norm" width="18" height="14" patternUnits="userSpaceOnUse"><rect width="18" height="14" fill="#8a7cf0"/><path d="M0 1H18M0 8H18" stroke="#60e8a0" stroke-width="1.5"/><path d="M6 0V7M14 7V14" stroke="#e060d0" stroke-width="1.2"/></pattern>
<pattern id="p_white2" width="18" height="14" patternUnits="userSpaceOnUse"><rect width="18" height="14" fill="#fafafa"/><path d="M0 0.5H18M0 7.5H18M6 0V7M14 7V14" stroke="#aaa" stroke-width="1"/></pattern>
<pattern id="p_beige" width="7" height="7" patternUnits="userSpaceOnUse"><rect width="7" height="7" fill="#d8b898"/><path d="M0 0.5H7M0.5 0V7" stroke="#8a6a50" stroke-width="1"/></pattern>
<pattern id="p_blue" width="7" height="7" patternUnits="userSpaceOnUse"><rect width="7" height="7" fill="#8080ff"/><path d="M0 0.5H7M0.5 0V7" stroke="#7474ee" stroke-width="1"/></pattern>
<pattern id="p_wcube" width="10" height="10" patternUnits="userSpaceOnUse"><rect width="10" height="10" fill="#f6f6f6"/><path d="M0 0H5V5H0Z" fill="#e0e0e0"/></pattern>
</defs><circle cx="502" cy="825" r="25.5" fill="url(#sph_blue)"/><path d="M478 815Q502 808 526 815M477 828Q502 822 527 828M480 840Q502 835 524 840M495 801Q490 825 495 849M510 801Q515 825 510 849" stroke="#1a2028" stroke-width="1.2" fill="none"/><defs><filter id="noise" x="0" y="0" width="100%" height="100%"><feTurbulence type="fractalNoise" baseFrequency="0.9" numOctaves="2" seed="3"/><feColorMatrix values="0 0 0 0 0.5  0 0 0 0 0.5  0 0 0 0 0.5  0 0 0 1.6 -0.55"/></filter><linearGradient id="wtile" x1="0" y1="0" x2="1" y2="1"><stop offset="0" stop-color="#fafafa"/><stop offset="1" stop-color="#b8b8b8"/></linearGradient></defs><rect x="550" y="797" width="56" height="56" fill="#0c1010"/><path d="M550.0 797.0h17.5v7.3h-17.5ZM567.5 797.0h11.7v7.3h-11.7ZM579.2 797.0h23.4v7.3h-23.4ZM602.6 797.0h3.4v7.3h-3.4ZM550.0 804.3h17.5v12.9h-17.5ZM567.5 804.3h11.7v23.7h-11.7ZM579.2 804.3h23.4v12.9h-23.4ZM602.6 804.3h3.4v12.9h-3.4ZM550.0 817.2h17.5v10.8h-17.5ZM579.2 817.2h12.1v10.8h-12.1ZM591.3 817.2h11.3v10.8h-11.3ZM602.6 817.2h3.4v10.8h-3.4ZM550.0 828.0h29.2v12.2h-29.2ZM579.2 828.0h12.1v25.0h-12.1ZM591.3 828.0h11.3v25.0h-11.3ZM602.6 828.0h3.4v25.0h-3.4ZM550.0 840.2h17.5v12.8h-17.5ZM567.5 840.2h11.7v12.8h-11.7Z" fill="#343c40" stroke="#0c1010" stroke-width="1.6"/><rect x="550" y="797" width="56" height="56" filter="url(#noise)" opacity="0.35"/><rect x="626" y="797" width="56" height="56" fill="#3a3a3a"/><path d="M626.0 797.0h17.5v7.3h-17.5ZM643.5 797.0h11.7v7.3h-11.7ZM655.2 797.0h23.4v7.3h-23.4ZM678.6 797.0h3.4v7.3h-3.4ZM626.0 804.3h17.5v12.9h-17.5ZM643.5 804.3h11.7v23.7h-11.7ZM655.2 804.3h23.4v12.9h-23.4ZM678.6 804.3h3.4v12.9h-3.4ZM626.0 817.2h17.5v10.8h-17.5ZM655.2 817.2h12.1v10.8h-12.1ZM667.3 817.2h11.3v10.8h-11.3ZM678.6 817.2h3.4v10.8h-3.4ZM626.0 828.0h29.2v12.2h-29.2ZM655.2 828.0h12.1v25.0h-12.1ZM667.3 828.0h11.3v25.0h-11.3ZM678.6 828.0h3.4v25.0h-3.4ZM626.0 840.2h17.5v12.8h-17.5ZM643.5 840.2h11.7v12.8h-11.7Z" fill="url(#wtile)" stroke="#484848" stroke-width="1.3"/><rect x="626" y="797" width="56" height="56" filter="url(#noise)" opacity="0.25"/><rect x="702" y="797" width="56" height="56" fill="#8878f0"/><path d="M702.0 797.0h17.5v7.3h-17.5ZM719.5 797.0h11.7v7.3h-11.7ZM731.2 797.0h23.4v7.3h-23.4ZM754.6 797.0h3.4v7.3h-3.4ZM702.0 804.3h17.5v12.9h-17.5ZM719.5 804.3h11.7v23.7h-11.7ZM731.2 804.3h23.4v12.9h-23.4ZM754.6 804.3h3.4v12.9h-3.4ZM702.0 817.2h17.5v10.8h-17.5ZM731.2 817.2h12.1v10.8h-12.1ZM743.3 817.2h11.3v10.8h-11.3ZM754.6 817.2h3.4v10.8h-3.4ZM702.0 828.0h29.2v12.2h-29.2ZM731.2 828.0h12.1v25.0h-12.1ZM743.3 828.0h11.3v25.0h-11.3ZM754.6 828.0h3.4v25.0h-3.4ZM702.0 840.2h17.5v12.8h-17.5ZM719.5 840.2h11.7v12.8h-11.7Z" fill="#8a7cf4" stroke="#68d8e8" stroke-width="1" stroke-opacity="0.8"/><rect x="702" y="797" width="56" height="56" filter="url(#noise)" opacity="0.3"/><rect x="778" y="797" width="56" height="56" fill="#fcfcfc"/><path d="M778.0 797.0h17.5v7.3h-17.5ZM795.5 797.0h11.7v7.3h-11.7ZM807.2 797.0h23.4v7.3h-23.4ZM830.6 797.0h3.4v7.3h-3.4ZM778.0 804.3h17.5v12.9h-17.5ZM795.5 804.3h11.7v23.7h-11.7ZM807.2 804.3h23.4v12.9h-23.4ZM830.6 804.3h3.4v12.9h-3.4ZM778.0 817.2h17.5v10.8h-17.5ZM807.2 817.2h12.1v10.8h-12.1ZM819.3 817.2h11.3v10.8h-11.3ZM830.6 817.2h3.4v10.8h-3.4ZM778.0 828.0h29.2v12.2h-29.2ZM807.2 828.0h12.1v25.0h-12.1ZM819.3 828.0h11.3v25.0h-11.3ZM830.6 828.0h3.4v25.0h-3.4ZM778.0 840.2h17.5v12.8h-17.5ZM795.5 840.2h11.7v12.8h-11.7Z" fill="#fcfcfc" stroke="#b0b0b0" stroke-width="1"/><rect x="852" y="795" width="60" height="60" fill="#555"/><circle cx="882" cy="825" r="27.5" fill="url(#sph_metal)"/><rect x="928" y="795" width="60" height="60" fill="#555"/><circle cx="958" cy="825" r="27.5" fill="url(#sph_wood)"/><rect x="1004" y="795" width="60" height="60" fill="#555"/><circle cx="1034" cy="825" r="27.5" fill="url(#sph_rock)"/><rect x="1080" y="795" width="60" height="60" fill="#555"/><circle cx="1110" cy="825" r="27.5" fill="url(#sph_tile)"/><clipPath id="cOl"><circle cx="958" cy="825" r="27.5"/></clipPath><clipPath id="cRo"><circle cx="1034" cy="825" r="27.5"/></clipPath><clipPath id="cC"><circle cx="882" cy="825" r="27.5"/></clipPath><clipPath id="cB"><circle cx="502" cy="825" r="25.5"/></clipPath><g clip-path="url(#cOl)"><path d="M936 798Q926 825 936 852M946 798Q940 825 946 852M958 797V853M970 798Q976 825 970 852M980 798Q990 825 980 852" stroke="#2e1e1a" stroke-width="1.1" fill="none" opacity="0.8"/><rect x="930" y="797" width="56" height="56" filter="url(#noise)" opacity="0.25"/></g><g clip-path="url(#cRo)"><rect x="1006" y="797" width="56" height="56" filter="url(#noise)" opacity="0.55"/><path d="M1020 810L1028 824L1022 846M1028 824L1044 830L1060 826M1038 800L1046 818L1062 834M1010 836L1022 846L1034 853M1044 830L1040 846L1050 853M1012 818L1020 822M1050 806L1056 812" stroke="#1e262c" stroke-width="2" fill="none"/><path d="M1024 830l5 3l-2 6l-5 -2zM1046 812l6 2l-1 5l-6 -1zM1014 826l4 1l-1 4l-4 -1zM1036 840l5 2l-2 4l-4 -2z" fill="#2a3238"/></g><g clip-path="url(#cC)"><rect x="854" y="797" width="56" height="56" filter="url(#noise)" opacity="0.3"/><path d="M866 820L874 826L884 822L896 830M880 806L886 814" stroke="#5a6a78" stroke-width="0.8" fill="none"/></g><path d="M1086 812Q1110 805 1134 812M1083 825H1137M1086 838Q1110 845 1134 838M1098 799Q1092 825 1098 851M1110 798V852M1122 799Q1128 825 1122 851M1090 805Q1110 798 1130 805M1088 846Q1110 852 1132 846" stroke="#3a3430" stroke-width="0.9" fill="none"/><g clip-path="url(#cB)"><rect x="476" y="799" width="52" height="52" filter="url(#noise)" opacity="0.3"/></g><rect x="1144" y="797" width="309" height="56" rx="8" fill="#4f4f4f"/><rect x="1158" y="797" width="56" height="56" fill="#485060"/><circle cx="1186" cy="824.5" r="25.7" fill="url(#sph_tile2)"/><path d="M1163 813Q1186 806 1209 813M1161 825H1211M1163 837Q1186 844 1209 837M1174 800Q1168 825 1174 850M1186 799V850M1198 800Q1204 825 1198 850" stroke="#2a3040" stroke-width="0.9" fill="none"/><rect x="1234" y="797" width="56" height="56" fill="url(#p_beige)"/><rect x="1310" y="797" width="56" height="56" fill="url(#p_blue)"/><rect x="1386" y="797" width="56" height="56" fill="#fbfbfb"/><rect x="1393" y="797" width="7" height="7" fill="#d4d4d4"/><rect x="1400" y="797" width="7" height="7" fill="#d4d4d4"/><rect x="1414" y="797" width="7" height="7" fill="#dcdcdc"/><rect x="1421" y="797" width="7" height="7" fill="#cccccc"/><rect x="1435" y="797" width="7" height="7" fill="#cccccc"/><rect x="1386" y="804" width="7" height="7" fill="#d4d4d4"/><rect x="1414" y="804" width="7" height="7" fill="#cccccc"/><rect x="1421" y="804" width="7" height="7" fill="#dcdcdc"/><rect x="1428" y="804" width="7" height="7" fill="#dcdcdc"/><rect x="1435" y="804" width="7" height="7" fill="#dcdcdc"/><rect x="1414" y="811" width="7" height="7" fill="#dcdcdc"/><rect x="1435" y="811" width="7" height="7" fill="#d4d4d4"/><rect x="1435" y="818" width="7" height="7" fill="#dcdcdc"/><rect x="1393" y="825" width="7" height="7" fill="#e2e2e2"/><rect x="1421" y="825" width="7" height="7" fill="#d4d4d4"/><rect x="1428" y="825" width="7" height="7" fill="#cccccc"/><rect x="1435" y="825" width="7" height="7" fill="#e2e2e2"/><rect x="1386" y="832" width="7" height="7" fill="#cccccc"/><rect x="1407" y="832" width="7" height="7" fill="#e2e2e2"/><rect x="1386" y="839" width="7" height="7" fill="#d4d4d4"/><rect x="1414" y="839" width="7" height="7" fill="#e2e2e2"/><rect x="1386" y="846" width="7" height="7" fill="#cccccc"/><rect x="1435" y="846" width="7" height="7" fill="#e2e2e2"/><path d="M1393.5 797V853M1400.5 797V853M1407.5 797V853M1414.5 797V853M1421.5 797V853M1428.5 797V853M1435.5 797V853M1386 804.5H1442M1386 811.5H1442M1386 818.5H1442M1386 825.5H1442M1386 832.5H1442M1386 839.5H1442M1386 846.5H1442" stroke="#a8a8a8" stroke-width="0.8"/><circle cx="913.5" cy="824.5" r="6.5" fill="#5a5a5a" stroke="#d8d8d8" stroke-width="1.2"/><path d="M911.7 821.5L916.3 824.5L911.7 827.5Z" fill="#fff"/><circle cx="989.5" cy="824.5" r="6.5" fill="#5a5a5a" stroke="#d8d8d8" stroke-width="1.2"/><path d="M987.7 821.5L992.3 824.5L987.7 827.5Z" fill="#fff"/><circle cx="1066" cy="824.5" r="6.5" fill="#5a5a5a" stroke="#d8d8d8" stroke-width="1.2"/><path d="M1064.2 821.5L1068.8 824.5L1064.2 827.5Z" fill="#fff"/><circle cx="1142.5" cy="824.5" r="6.5" fill="#5a5a5a" stroke="#d8d8d8" stroke-width="1.2"/><path d="M1144.3 821.5L1139.7 824.5L1144.3 827.5Z" fill="#fff"/></svg>
<div class="t" style="left:538px;width:80px;text-align:center;top:861.10px;font-size:9.1px;color:#222;letter-spacing:0.12px">RedBeard_B...</div>
<div class="t" style="left:614px;width:80px;text-align:center;top:861.10px;font-size:9.1px;color:#222;letter-spacing:0.12px">RedBeard_B...</div>
<div class="t" style="left:690px;width:80px;text-align:center;top:861.10px;font-size:9.1px;color:#222;letter-spacing:0.12px">RedBeard_B...</div>
<div class="t" style="left:766px;width:80px;text-align:center;top:861.10px;font-size:9.1px;color:#222;letter-spacing:0.12px">RedBeard_B...</div>
<div class="t" style="left:842px;width:80px;text-align:center;top:861.10px;font-size:9.1px;color:#222;letter-spacing:0.12px">RedBeard_C...</div>
<div class="t" style="left:918px;width:80px;text-align:center;top:861.10px;font-size:9.1px;color:#222;letter-spacing:0.12px">RedBeard_Ol...</div>
<div class="t" style="left:994px;width:80px;text-align:center;top:861.10px;font-size:9.1px;color:#222;letter-spacing:0.12px">RedBeard_Ro...</div>
<div class="t" style="left:1070px;width:80px;text-align:center;top:861.10px;font-size:9.1px;color:#222;letter-spacing:0.12px">RedBeard_Til...</div>
<div class="t" style="left:1222px;width:80px;text-align:center;top:861.10px;font-size:9.1px;color:#222;letter-spacing:0.12px">RedBeard_T...</div>
<div class="t" style="left:1298px;width:80px;text-align:center;top:861.10px;font-size:9.1px;color:#222;letter-spacing:0.12px">RedBeard_T...</div>
<div class="t" style="left:1374px;width:80px;text-align:center;top:861.10px;font-size:9.1px;color:#222;letter-spacing:0.12px">RedBeard_T...</div>
<div class="t" style="left:488px;top:861.10px;font-size:9.1px;color:#222;letter-spacing:0.12px;">Beard_B...</div>
<div class="a" style="left:1148px;top:858px;width:75px;height:14px;background:#7c7c7c;border-radius:7px;"></div>
<div class="t" style="left:1146px;width:80px;text-align:center;top:861.10px;font-size:9.1px;color:#fff;letter-spacing:0.12px">RedBeard_T...</div>
<div class="a" style="left:0px;top:1151px;width:1920px;height:1px;background:#7e7e7e;"></div>
<div class="a" style="left:0px;top:1152px;width:1920px;height:21px;background:#a2a2a2;"></div>
<svg class="a" style="left:3px;top:1156px;" width="13" height="13" viewBox="0 0 13 13"><path d="M6.5 0.8L12.5 12.3H0.5Z" fill="#f8d818" stroke="#9a8a20" stroke-width="0.9" stroke-linejoin="round"/><rect x="5.8" y="4.2" width="1.5" height="4.5" fill="#222"/><rect x="5.8" y="9.6" width="1.5" height="1.5" fill="#222"/></svg>
<div class="t" style="left:20.4px;top:1158.62px;font-size:11.2px;color:#3c3c16;letter-spacing:0.385px;">Assets/Editor/ScreenshotTaker.cs(17,7): warning CS0414: The private field `Screenshot.showPreview' is assigned but its value is never used</div>
<div class="a" style="left:287px;top:609px;width:202px;height:429px;border-radius:8px 8px 0 0;box-shadow:2px 4px 10px rgba(0,0,0,0.35)"></div>
<div class="a" style="left:287px;top:609px;width:202px;height:429px;border-radius:8px 8px 0 0;background:#c4c4c4;border:1px solid #2e3232;overflow:hidden"></div>
<div class="a" style="left:287px;top:609px;width:202px;height:38px;border-radius:8px 8px 0 0;background:#353b3b"></div>
<div class="t" style="left:292.6px;top:620.61px;font-size:14.64px;color:#f2f2f2;-webkit-text-stroke:0.4px #f2f2f2;">Select Mate...</div>
<div class="a" style="left:398px;top:629px;width:8px;height:3px;background:#f0f0f0;"></div>
<div class="a" style="left:432px;top:624px;width:8px;height:8px;border:2px solid #f0f0f0;"></div>
<svg class="a" style="left:465px;top:623px;" width="10" height="10" viewBox="0 0 10 10"><path d="M1 1L9 9M9 1L1 9" stroke="#f0f0f0" stroke-width="2.2"/></svg>
<div class="a" style="left:288px;top:647px;width:200px;height:28px;background:#e2e2e2;"></div>
<div class="a" style="left:293px;top:652px;width:192px;height:18px;border:1px solid #8a8a8a;border-radius:9px;background:linear-gradient(#cfcfcf,#dedede 40%,#e0e0e0)"></div>
<svg class="a" style="left:299px;top:656px;" width="11" height="11" viewBox="0 0 11 11"><circle cx="4.2" cy="4.2" r="3.4" fill="none" stroke="#444" stroke-width="1"/><path d="M6.6 6.6L10 10" stroke="#444" stroke-width="1.1"/></svg>
<div class="a" style="left:315px;top:654px;width:1px;height:12px;background:#111;"></div>
<div class="a" style="left:288px;top:674px;width:200px;height:1px;background:#a4a4a4;"></div>
<div class="a" style="left:288px;top:675px;width:200px;height:16px;background:#c8c8c8;"></div>
<div class="a" style="left:289px;top:675px;width:49px;height:16px;background:linear-gradient(#dcdcdc,#d0d0d0);border-right:1px solid #a8a8a8;border-bottom:1px solid #b8b8b8;border-radius:0 3px 0 0"></div>
<div class="t" style="left:295.5px;top:677.02px;font-size:11.2px;color:#111;letter-spacing:0.3px;">Assets</div>
<div class="t" style="left:345px;top:677.19px;font-size:11.0px;color:#111;letter-spacing:0.2px;">Scene</div>
<div class="a" style="left:432px;top:680px;width:51px;height:4px;background:linear-gradient(#8a8a8a,#b8b8b8);border-radius:2px;"></div>
<svg class="a" style="left:426px;top:676px;" width="12" height="12" viewBox="0 0 12 12"><defs><linearGradient id="kn2" x1="0" y1="0" x2="0" y2="1"><stop offset="0" stop-color="#fff"/><stop offset="1" stop-color="#bcbcbc"/></linearGradient></defs><circle cx="6" cy="6" r="5" fill="url(#kn2)" stroke="#7a7a7a" stroke-width="1"/></svg>
<div class="t" style="left:322.4px;top:694.01px;font-size:11.45px;color:#000;width:165px;clip-path:inset(-4px 0 -6px 0)">None</div>
<svg class="a" style="left:305px;top:709.2px;" width="14" height="14" viewBox="0 0 14 14"><defs><radialGradient id="rb" cx="0.4" cy="0.3" r="0.75"><stop offset="0" stop-color="#c8dcf4"/><stop offset="0.55" stop-color="#5a80b8"/><stop offset="1" stop-color="#2a4478"/></radialGradient></defs><circle cx="7" cy="7" r="6.8" fill="url(#rb)"/><path d="M8 2.5Q4.5 4 7.5 6.5Q10 9 6 11.5" fill="none" stroke="#e01818" stroke-width="2"/><circle cx="6.5" cy="9.8" r="2.6" fill="#d01010"/></svg>
<div class="t" style="left:322.4px;top:710.01px;font-size:11.45px;color:#000;width:165px;clip-path:inset(-4px 0 -6px 0)">RedBeard_BluestoneWall</div>
<svg class="a" style="left:305px;top:725.2px;" width="14" height="14" viewBox="0 0 14 14"><defs><radialGradient id="rb" cx="0.4" cy="0.3" r="0.75"><stop offset="0" stop-color="#c8dcf4"/><stop offset="0.55" stop-color="#5a80b8"/><stop offset="1" stop-color="#2a4478"/></radialGradient></defs><circle cx="7" cy="7" r="6.8" fill="url(#rb)"/><path d="M8 2.5Q4.5 4 7.5 6.5Q10 9 6 11.5" fill="none" stroke="#e01818" stroke-width="2"/><circle cx="6.5" cy="9.8" r="2.6" fill="#d01010"/></svg>
<div class="t" style="left:322.4px;top:726.01px;font-size:11.45px;color:#000;width:165px;clip-path:inset(-4px 0 -6px 0)">Redbeard_Concrete</div>
<svg class="a" style="left:305px;top:741.2px;" width="14" height="14" viewBox="0 0 14 14"><defs><radialGradient id="rb" cx="0.4" cy="0.3" r="0.75"><stop offset="0" stop-color="#c8dcf4"/><stop offset="0.55" stop-color="#5a80b8"/><stop offset="1" stop-color="#2a4478"/></radialGradient></defs><circle cx="7" cy="7" r="6.8" fill="url(#rb)"/><path d="M8 2.5Q4.5 4 7.5 6.5Q10 9 6 11.5" fill="none" stroke="#e01818" stroke-width="2"/><circle cx="6.5" cy="9.8" r="2.6" fill="#d01010"/></svg>
<div class="t" style="left:322.4px;top:742.01px;font-size:11.45px;color:#000;width:165px;clip-path:inset(-4px 0 -6px 0)">RedBeard_RockGround</div>
<svg class="a" style="left:305px;top:757.2px;" width="14" height="14" viewBox="0 0 14 14"><defs><radialGradient id="rb" cx="0.4" cy="0.3" r="0.75"><stop offset="0" stop-color="#c8dcf4"/><stop offset="0.55" stop-color="#5a80b8"/><stop offset="1" stop-color="#2a4478"/></radialGradient></defs><circle cx="7" cy="7" r="6.8" fill="url(#rb)"/><path d="M8 2.5Q4.5 4 7.5 6.5Q10 9 6 11.5" fill="none" stroke="#e01818" stroke-width="2"/><circle cx="6.5" cy="9.8" r="2.6" fill="#d01010"/></svg>
<div class="t" style="left:322.4px;top:758.01px;font-size:11.45px;color:#000;width:165px;clip-path:inset(-4px 0 -6px 0)">RedBeard_Tiles</div>
<svg class="a" style="left:305px;top:773.2px;" width="14" height="14" viewBox="0 0 14 14"><defs><radialGradient id="rb" cx="0.4" cy="0.3" r="0.75"><stop offset="0" stop-color="#c8dcf4"/><stop offset="0.55" stop-color="#5a80b8"/><stop offset="1" stop-color="#2a4478"/></radialGradient></defs><circle cx="7" cy="7" r="6.8" fill="url(#rb)"/><path d="M8 2.5Q4.5 4 7.5 6.5Q10 9 6 11.5" fill="none" stroke="#e01818" stroke-width="2"/><circle cx="6.5" cy="9.8" r="2.6" fill="#d01010"/></svg>
<div class="t" style="left:322.4px;top:774.01px;font-size:11.45px;color:#000;width:165px;clip-path:inset(-4px 0 -6px 0)">RedBeard_WoodWall</div>
<div class="t" style="left:322.4px;top:790.01px;font-size:11.45px;color:#000;width:165px;clip-path:inset(-4px 0 -6px 0)">FrameDebuggerRenderTargetDisplay</div>
<div class="t" style="left:322.4px;top:806.01px;font-size:11.45px;color:#000;width:165px;clip-path:inset(-4px 0 -6px 0)">Default-Diffuse</div>
<div class="a" style="left:288px;top:819px;width:200px;height:16px;background:#3f80e0;"></div>
<div class="a" style="left:304px;top:819px;width:16px;height:16px;background:#555;"></div>
<svg class="a" style="left:305px;top:820px;" width="14" height="14" viewBox="0 0 14 14"><defs><radialGradient id="ws2" cx="0.4" cy="0.3" r="0.75"><stop offset="0" stop-color="#fff"/><stop offset="0.6" stop-color="#e4e8f0"/><stop offset="1" stop-color="#8a94a8"/></radialGradient></defs><circle cx="7" cy="7" r="6.8" fill="url(#ws2)"/></svg>
<div class="t" style="left:322.4px;top:822.01px;font-size:11.45px;color:#fff;width:165px;clip-path:inset(-4px 0 -6px 0)">Default-Material</div>
<div class="t" style="left:322.4px;top:838.01px;font-size:11.45px;color:#000;width:165px;clip-path:inset(-4px 0 -6px 0)">Default-Particle</div>
<div class="t" style="left:322.4px;top:854.01px;font-size:11.45px;color:#000;width:165px;clip-path:inset(-4px 0 -6px 0)">Default-Skybox</div>
<div class="t" style="left:322.4px;top:870.01px;font-size:11.45px;color:#000;width:165px;clip-path:inset(-4px 0 -6px 0)">Sprites-Default</div>
<div class="t" style="left:322.4px;top:886.01px;font-size:11.45px;color:#000;width:165px;clip-path:inset(-4px 0 -6px 0)">SpatialMappingOcclusion</div>
<div class="t" style="left:322.4px;top:902.01px;font-size:11.45px;color:#000;width:165px;clip-path:inset(-4px 0 -6px 0)">SpatialMappingWireframe</div>
<div class="a" style="left:288px;top:1017px;width:200px;height:1px;background:#b0b0b0;"></div>
<div class="a" style="left:288px;top:1018px;width:200px;height:19px;background:#c8c8c8;"></div>
<div class="a" style="left:372px;top:1020px;width:32px;height:1px;background:#999;"></div>
<div class="a" style="left:372px;top:1022px;width:32px;height:1px;background:#999;"></div>
<div class="t" style="left:308px;top:1022.89px;font-size:11.94px;color:#111;">Default-Material (Material)</div>
<div class="t" style="left:465px;top:1023.52px;font-size:11.2px;color:#111;">Res</div>
